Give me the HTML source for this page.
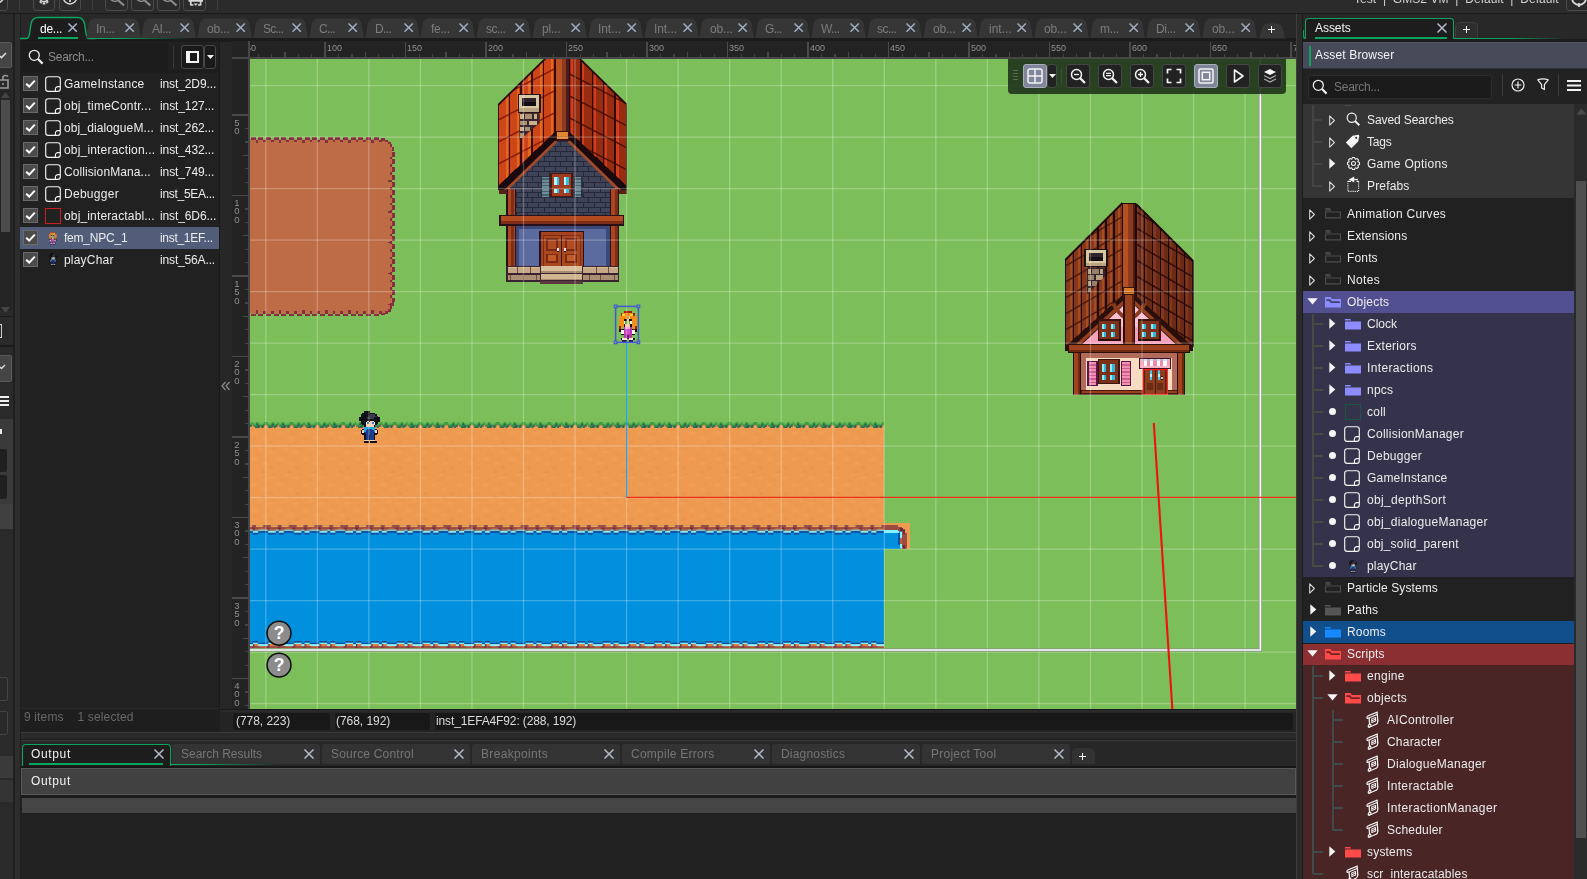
<!DOCTYPE html>
<html><head><meta charset="utf-8"><title>GameMaker</title><style>
*{box-sizing:border-box;margin:0;padding:0}
html,body{width:1587px;height:879px;overflow:hidden;background:#212121}
body{font-family:"Liberation Sans",sans-serif;font-size:13px;color:#ececec;position:relative}
.abs{position:absolute}
.t{position:absolute;white-space:nowrap;line-height:16px;height:16px;color:#ececec;will-change:transform}
svg{display:block;overflow:visible}
</style></head><body>
<div class="abs" style="left:0;top:14px;width:14px;height:865px;background:#2a2a2a"></div><div class="abs" style="left:14px;top:14px;width:7px;height:865px;background:#2d2d2d"></div><div class="abs" style="left:13px;top:14px;width:2px;height:865px;background:#1f1f1f"></div><div class="abs" style="left:20px;top:14px;width:1px;height:865px;background:#1f1f1f"></div><div class="abs" style="left:-6px;top:42px;width:18px;height:26px;background:#454545;border:1px solid #5a5a5a;border-radius:2px"></div><svg class="abs" style="left:0;top:48px" width="8" height="12" viewBox="0 0 8 12"><path d="M0 8l1.5 1.5L6 5" stroke="#ddd" stroke-width="1.6" fill="none"/></svg><svg class="abs" style="left:0;top:70px" width="12" height="20" viewBox="0 0 12 20" fill="none" stroke="#999" stroke-width="1.6"><path d="M-2 10h10v8h-10M3 10v-3.5a3.5 3.5 0 0 1 5 0"/><path d="M3 13v2" /></svg><div class="abs" style="left:0;top:90px;width:12px;height:220px;background:#252525"></div><div class="abs" style="left:1px;top:100px;width:9px;height:132px;background:#4c4c4c"></div><svg class="abs" style="left:0;top:90px" width="12" height="10"><path d="M1 8h9L5.5 2z" fill="#444"/></svg><svg class="abs" style="left:0;top:305px" width="12" height="10"><path d="M1 2h9L5.5 8z" fill="#444"/></svg><div class="abs" style="left:0;top:316px;width:13px;height:1px;background:#1c1c1c"></div><div class="abs" style="left:0px;top:324px;width:2px;height:14px;border:1px solid #ccc;border-left:none"></div><div class="abs" style="left:0;top:345px;width:13px;height:2px;background:#1c1c1c"></div><div class="abs" style="left:-6px;top:355px;width:18px;height:27px;background:#454545;border:1px solid #5a5a5a;border-radius:2px"></div><svg class="abs" style="left:0;top:362px" width="8" height="12" viewBox="0 0 8 12"><path d="M0 5l1.5 1.5L5 3" stroke="#ddd" stroke-width="1.4" fill="none"/></svg><div class="abs" style="left:0;top:396px;width:9px;height:2px;background:#eee;box-shadow:0 4px #eee,0 8px #eee"></div><div class="abs" style="left:0;top:419px;width:12.5px;height:85px;background:#3a3a3a"></div><div class="abs" style="left:0;top:429px;width:1.5px;height:5px;background:#eee"></div><div class="abs" style="left:-4px;top:448.5px;width:11px;height:23px;background:#202020;border-radius:2px"></div><div class="abs" style="left:-4px;top:475px;width:11px;height:24px;background:#202020;border-radius:2px"></div><div class="abs" style="left:0;top:504px;width:13px;height:24.5px;background:#404040"></div><div class="abs" style="left:-4px;top:677px;width:11.5px;height:24px;border:1px solid #444;border-radius:2px"></div><div class="abs" style="left:-4px;top:711px;width:11.5px;height:24px;border:1px solid #444;border-radius:2px"></div><div class="abs" style="left:0;top:756px;width:13px;height:22px;background:#3a3a3a"></div><div class="abs" style="left:0;top:780px;width:13px;height:22px;background:#343434"></div><div class="abs" style="left:21px;top:14px;width:1275px;height:26px;background:#282828"></div><div class="abs" style="left:21px;top:38px;width:1275px;height:4px;background:#1b1b1b"></div><svg class="abs" style="left:20.3px;top:16px" width="75.6" height="24" viewBox="-8 -2 75.6 24"><path d="M-8 20.5H-1.5C0.5 20.5 1 19 1.3 17L3 6C4 1.5 6 -0.5 10 -0.5H49.6C53.6 -0.5 55.6 1.5 56.6 6L58.300000000000004 17C58.6 19 59.1 20.5 61.1 20.5H67.6V22H-8Z" fill="#1d1d1d" stroke="none"/><path d="M-8 20.5H-1.5C0.5 20.5 1 19 1.3 17L3 6C4 1.5 6 -0.5 10 -0.5H49.6C53.6 -0.5 55.6 1.5 56.6 6L58.300000000000004 17C58.6 19 59.1 20.5 61.1 20.5H67.6" fill="none" stroke="#0aa561" stroke-width="1.4"/></svg><div class="t" style="left:40px;top:21px;color:#ffffff;font-size:12px;letter-spacing:-0.254px;">de...</div><svg class="abs" style="left:68.3px;top:23.4px" width="9.3" height="9.3" viewBox="0 0 9.3 9.3"><path d="M0.5 0.5L8.8 8.8M8.8 0.5L0.5 8.8" stroke="#a9b4c8" stroke-width="1.5" fill="none"/></svg><div class="abs" style="left:38px;top:36.6px;width:40px;height:2.2px;background:#0aa561"></div><svg class="abs" style="left:85.6px;top:18px" width="55.3" height="20" viewBox="0 0 55.3 20"><path d="M0 20C0.8 18 1.2 16 1.6 13L2.4 7.5C3.2 2.5 5.4 0.5 9.5 0.5H45.8C49.9 0.5 52.099999999999994 2.5 52.9 7.5L53.699999999999996 13C54.099999999999994 16 54.5 18 55.3 20Z" fill="#363636"/></svg><div class="t" style="left:95.8px;top:21px;color:#7c7c7c;font-size:12px;letter-spacing:-0.264px;">In...</div><svg class="abs" style="left:124.5px;top:23.4px" width="9.3" height="9.3" viewBox="0 0 9.3 9.3"><path d="M0.5 0.5L8.8 8.8M8.8 0.5L0.5 8.8" stroke="#a3aec2" stroke-width="1.5" fill="none"/></svg><svg class="abs" style="left:141.4px;top:18px" width="55.3" height="20" viewBox="0 0 55.3 20"><path d="M0 20C0.8 18 1.2 16 1.6 13L2.4 7.5C3.2 2.5 5.4 0.5 9.5 0.5H45.8C49.9 0.5 52.099999999999994 2.5 52.9 7.5L53.699999999999996 13C54.099999999999994 16 54.5 18 55.3 20Z" fill="#363636"/></svg><div class="t" style="left:151.6px;top:21px;color:#7c7c7c;font-size:12px;letter-spacing:-0.483px;">AI...</div><svg class="abs" style="left:180.3px;top:23.4px" width="9.3" height="9.3" viewBox="0 0 9.3 9.3"><path d="M0.5 0.5L8.8 8.8M8.8 0.5L0.5 8.8" stroke="#a3aec2" stroke-width="1.5" fill="none"/></svg><svg class="abs" style="left:197.20000000000002px;top:18px" width="55.3" height="20" viewBox="0 0 55.3 20"><path d="M0 20C0.8 18 1.2 16 1.6 13L2.4 7.5C3.2 2.5 5.4 0.5 9.5 0.5H45.8C49.9 0.5 52.099999999999994 2.5 52.9 7.5L53.699999999999996 13C54.099999999999994 16 54.5 18 55.3 20Z" fill="#363636"/></svg><div class="t" style="left:207.4px;top:21px;color:#7c7c7c;font-size:12px;letter-spacing:-0.151px;">ob...</div><svg class="abs" style="left:236.1px;top:23.4px" width="9.3" height="9.3" viewBox="0 0 9.3 9.3"><path d="M0.5 0.5L8.8 8.8M8.8 0.5L0.5 8.8" stroke="#a3aec2" stroke-width="1.5" fill="none"/></svg><svg class="abs" style="left:253.0px;top:18px" width="55.3" height="20" viewBox="0 0 55.3 20"><path d="M0 20C0.8 18 1.2 16 1.6 13L2.4 7.5C3.2 2.5 5.4 0.5 9.5 0.5H45.8C49.9 0.5 52.099999999999994 2.5 52.9 7.5L53.699999999999996 13C54.099999999999994 16 54.5 18 55.3 20Z" fill="#363636"/></svg><div class="t" style="left:263.2px;top:21px;color:#7c7c7c;font-size:12px;letter-spacing:-0.742px;">Sc...</div><svg class="abs" style="left:291.9px;top:23.4px" width="9.3" height="9.3" viewBox="0 0 9.3 9.3"><path d="M0.5 0.5L8.8 8.8M8.8 0.5L0.5 8.8" stroke="#a3aec2" stroke-width="1.5" fill="none"/></svg><svg class="abs" style="left:308.8px;top:18px" width="55.3" height="20" viewBox="0 0 55.3 20"><path d="M0 20C0.8 18 1.2 16 1.6 13L2.4 7.5C3.2 2.5 5.4 0.5 9.5 0.5H45.8C49.9 0.5 52.099999999999994 2.5 52.9 7.5L53.699999999999996 13C54.099999999999994 16 54.5 18 55.3 20Z" fill="#363636"/></svg><div class="t" style="left:319.0px;top:21px;color:#7c7c7c;font-size:12px;letter-spacing:-0.779px;">C...</div><svg class="abs" style="left:347.7px;top:23.4px" width="9.3" height="9.3" viewBox="0 0 9.3 9.3"><path d="M0.5 0.5L8.8 8.8M8.8 0.5L0.5 8.8" stroke="#a3aec2" stroke-width="1.5" fill="none"/></svg><svg class="abs" style="left:364.6px;top:18px" width="55.3" height="20" viewBox="0 0 55.3 20"><path d="M0 20C0.8 18 1.2 16 1.6 13L2.4 7.5C3.2 2.5 5.4 0.5 9.5 0.5H45.8C49.9 0.5 52.099999999999994 2.5 52.9 7.5L53.699999999999996 13C54.099999999999994 16 54.5 18 55.3 20Z" fill="#363636"/></svg><div class="t" style="left:374.8px;top:21px;color:#7c7c7c;font-size:12px;letter-spacing:-0.607px;">D...</div><svg class="abs" style="left:403.5px;top:23.4px" width="9.3" height="9.3" viewBox="0 0 9.3 9.3"><path d="M0.5 0.5L8.8 8.8M8.8 0.5L0.5 8.8" stroke="#a3aec2" stroke-width="1.5" fill="none"/></svg><svg class="abs" style="left:420.40000000000003px;top:18px" width="55.3" height="20" viewBox="0 0 55.3 20"><path d="M0 20C0.8 18 1.2 16 1.6 13L2.4 7.5C3.2 2.5 5.4 0.5 9.5 0.5H45.8C49.9 0.5 52.099999999999994 2.5 52.9 7.5L53.699999999999996 13C54.099999999999994 16 54.5 18 55.3 20Z" fill="#363636"/></svg><div class="t" style="left:430.6px;top:21px;color:#7c7c7c;font-size:12px;letter-spacing:-0.245px;">fe...</div><svg class="abs" style="left:459.3px;top:23.4px" width="9.3" height="9.3" viewBox="0 0 9.3 9.3"><path d="M0.5 0.5L8.8 8.8M8.8 0.5L0.5 8.8" stroke="#a3aec2" stroke-width="1.5" fill="none"/></svg><svg class="abs" style="left:476.2px;top:18px" width="55.3" height="20" viewBox="0 0 55.3 20"><path d="M0 20C0.8 18 1.2 16 1.6 13L2.4 7.5C3.2 2.5 5.4 0.5 9.5 0.5H45.8C49.9 0.5 52.099999999999994 2.5 52.9 7.5L53.699999999999996 13C54.099999999999994 16 54.5 18 55.3 20Z" fill="#363636"/></svg><div class="t" style="left:486.4px;top:21px;color:#7c7c7c;font-size:12px;letter-spacing:-0.517px;">sc...</div><svg class="abs" style="left:515.1px;top:23.4px" width="9.3" height="9.3" viewBox="0 0 9.3 9.3"><path d="M0.5 0.5L8.8 8.8M8.8 0.5L0.5 8.8" stroke="#a3aec2" stroke-width="1.5" fill="none"/></svg><svg class="abs" style="left:532.0px;top:18px" width="55.3" height="20" viewBox="0 0 55.3 20"><path d="M0 20C0.8 18 1.2 16 1.6 13L2.4 7.5C3.2 2.5 5.4 0.5 9.5 0.5H45.8C49.9 0.5 52.099999999999994 2.5 52.9 7.5L53.699999999999996 13C54.099999999999994 16 54.5 18 55.3 20Z" fill="#363636"/></svg><div class="t" style="left:542.2px;top:21px;color:#7c7c7c;font-size:12px;letter-spacing:-0.195px;">pl...</div><svg class="abs" style="left:570.9px;top:23.4px" width="9.3" height="9.3" viewBox="0 0 9.3 9.3"><path d="M0.5 0.5L8.8 8.8M8.8 0.5L0.5 8.8" stroke="#a3aec2" stroke-width="1.5" fill="none"/></svg><svg class="abs" style="left:587.8px;top:18px" width="55.3" height="20" viewBox="0 0 55.3 20"><path d="M0 20C0.8 18 1.2 16 1.6 13L2.4 7.5C3.2 2.5 5.4 0.5 9.5 0.5H45.8C49.9 0.5 52.099999999999994 2.5 52.9 7.5L53.699999999999996 13C54.099999999999994 16 54.5 18 55.3 20Z" fill="#363636"/></svg><div class="t" style="left:598.0px;top:21px;color:#7c7c7c;font-size:12px;letter-spacing:-0.069px;">Int...</div><svg class="abs" style="left:626.7px;top:23.4px" width="9.3" height="9.3" viewBox="0 0 9.3 9.3"><path d="M0.5 0.5L8.8 8.8M8.8 0.5L0.5 8.8" stroke="#a3aec2" stroke-width="1.5" fill="none"/></svg><svg class="abs" style="left:643.5999999999999px;top:18px" width="55.3" height="20" viewBox="0 0 55.3 20"><path d="M0 20C0.8 18 1.2 16 1.6 13L2.4 7.5C3.2 2.5 5.4 0.5 9.5 0.5H45.8C49.9 0.5 52.099999999999994 2.5 52.9 7.5L53.699999999999996 13C54.099999999999994 16 54.5 18 55.3 20Z" fill="#363636"/></svg><div class="t" style="left:653.8px;top:21px;color:#7c7c7c;font-size:12px;letter-spacing:-0.069px;">Int...</div><svg class="abs" style="left:682.5px;top:23.4px" width="9.3" height="9.3" viewBox="0 0 9.3 9.3"><path d="M0.5 0.5L8.8 8.8M8.8 0.5L0.5 8.8" stroke="#a3aec2" stroke-width="1.5" fill="none"/></svg><svg class="abs" style="left:699.4px;top:18px" width="55.3" height="20" viewBox="0 0 55.3 20"><path d="M0 20C0.8 18 1.2 16 1.6 13L2.4 7.5C3.2 2.5 5.4 0.5 9.5 0.5H45.8C49.9 0.5 52.099999999999994 2.5 52.9 7.5L53.699999999999996 13C54.099999999999994 16 54.5 18 55.3 20Z" fill="#363636"/></svg><div class="t" style="left:709.6px;top:21px;color:#7c7c7c;font-size:12px;letter-spacing:-0.151px;">ob...</div><svg class="abs" style="left:738.3px;top:23.4px" width="9.3" height="9.3" viewBox="0 0 9.3 9.3"><path d="M0.5 0.5L8.8 8.8M8.8 0.5L0.5 8.8" stroke="#a3aec2" stroke-width="1.5" fill="none"/></svg><svg class="abs" style="left:755.1999999999999px;top:18px" width="55.3" height="20" viewBox="0 0 55.3 20"><path d="M0 20C0.8 18 1.2 16 1.6 13L2.4 7.5C3.2 2.5 5.4 0.5 9.5 0.5H45.8C49.9 0.5 52.099999999999994 2.5 52.9 7.5L53.699999999999996 13C54.099999999999994 16 54.5 18 55.3 20Z" fill="#363636"/></svg><div class="t" style="left:765.4px;top:21px;color:#7c7c7c;font-size:12px;letter-spacing:-0.654px;">G...</div><svg class="abs" style="left:794.1px;top:23.4px" width="9.3" height="9.3" viewBox="0 0 9.3 9.3"><path d="M0.5 0.5L8.8 8.8M8.8 0.5L0.5 8.8" stroke="#a3aec2" stroke-width="1.5" fill="none"/></svg><svg class="abs" style="left:811.0px;top:18px" width="55.3" height="20" viewBox="0 0 55.3 20"><path d="M0 20C0.8 18 1.2 16 1.6 13L2.4 7.5C3.2 2.5 5.4 0.5 9.5 0.5H45.8C49.9 0.5 52.099999999999994 2.5 52.9 7.5L53.699999999999996 13C54.099999999999994 16 54.5 18 55.3 20Z" fill="#363636"/></svg><div class="t" style="left:821.2px;top:21px;color:#7c7c7c;font-size:12px;letter-spacing:-0.545px;">W...</div><svg class="abs" style="left:849.9px;top:23.4px" width="9.3" height="9.3" viewBox="0 0 9.3 9.3"><path d="M0.5 0.5L8.8 8.8M8.8 0.5L0.5 8.8" stroke="#a3aec2" stroke-width="1.5" fill="none"/></svg><svg class="abs" style="left:866.8px;top:18px" width="55.3" height="20" viewBox="0 0 55.3 20"><path d="M0 20C0.8 18 1.2 16 1.6 13L2.4 7.5C3.2 2.5 5.4 0.5 9.5 0.5H45.8C49.9 0.5 52.099999999999994 2.5 52.9 7.5L53.699999999999996 13C54.099999999999994 16 54.5 18 55.3 20Z" fill="#363636"/></svg><div class="t" style="left:877.0px;top:21px;color:#7c7c7c;font-size:12px;letter-spacing:-0.517px;">sc...</div><svg class="abs" style="left:905.7px;top:23.4px" width="9.3" height="9.3" viewBox="0 0 9.3 9.3"><path d="M0.5 0.5L8.8 8.8M8.8 0.5L0.5 8.8" stroke="#a3aec2" stroke-width="1.5" fill="none"/></svg><svg class="abs" style="left:922.5999999999999px;top:18px" width="55.3" height="20" viewBox="0 0 55.3 20"><path d="M0 20C0.8 18 1.2 16 1.6 13L2.4 7.5C3.2 2.5 5.4 0.5 9.5 0.5H45.8C49.9 0.5 52.099999999999994 2.5 52.9 7.5L53.699999999999996 13C54.099999999999994 16 54.5 18 55.3 20Z" fill="#363636"/></svg><div class="t" style="left:932.8px;top:21px;color:#7c7c7c;font-size:12px;letter-spacing:-0.151px;">ob...</div><svg class="abs" style="left:961.5px;top:23.4px" width="9.3" height="9.3" viewBox="0 0 9.3 9.3"><path d="M0.5 0.5L8.8 8.8M8.8 0.5L0.5 8.8" stroke="#a3aec2" stroke-width="1.5" fill="none"/></svg><svg class="abs" style="left:978.4px;top:18px" width="55.3" height="20" viewBox="0 0 55.3 20"><path d="M0 20C0.8 18 1.2 16 1.6 13L2.4 7.5C3.2 2.5 5.4 0.5 9.5 0.5H45.8C49.9 0.5 52.099999999999994 2.5 52.9 7.5L53.699999999999996 13C54.099999999999994 16 54.5 18 55.3 20Z" fill="#363636"/></svg><div class="t" style="left:988.6px;top:21px;color:#7c7c7c;font-size:12px;letter-spacing:-0.011px;">int...</div><svg class="abs" style="left:1017.3px;top:23.4px" width="9.3" height="9.3" viewBox="0 0 9.3 9.3"><path d="M0.5 0.5L8.8 8.8M8.8 0.5L0.5 8.8" stroke="#a3aec2" stroke-width="1.5" fill="none"/></svg><svg class="abs" style="left:1034.2px;top:18px" width="55.3" height="20" viewBox="0 0 55.3 20"><path d="M0 20C0.8 18 1.2 16 1.6 13L2.4 7.5C3.2 2.5 5.4 0.5 9.5 0.5H45.8C49.9 0.5 52.099999999999994 2.5 52.9 7.5L53.699999999999996 13C54.099999999999994 16 54.5 18 55.3 20Z" fill="#363636"/></svg><div class="t" style="left:1044.4px;top:21px;color:#7c7c7c;font-size:12px;letter-spacing:-0.151px;">ob...</div><svg class="abs" style="left:1073.1px;top:23.4px" width="9.3" height="9.3" viewBox="0 0 9.3 9.3"><path d="M0.5 0.5L8.8 8.8M8.8 0.5L0.5 8.8" stroke="#a3aec2" stroke-width="1.5" fill="none"/></svg><svg class="abs" style="left:1090.0px;top:18px" width="55.3" height="20" viewBox="0 0 55.3 20"><path d="M0 20C0.8 18 1.2 16 1.6 13L2.4 7.5C3.2 2.5 5.4 0.5 9.5 0.5H45.8C49.9 0.5 52.099999999999994 2.5 52.9 7.5L53.699999999999996 13C54.099999999999994 16 54.5 18 55.3 20Z" fill="#363636"/></svg><div class="t" style="left:1100.2px;top:21px;color:#7c7c7c;font-size:12px;letter-spacing:-0.216px;">m...</div><svg class="abs" style="left:1128.9px;top:23.4px" width="9.3" height="9.3" viewBox="0 0 9.3 9.3"><path d="M0.5 0.5L8.8 8.8M8.8 0.5L0.5 8.8" stroke="#a3aec2" stroke-width="1.5" fill="none"/></svg><svg class="abs" style="left:1145.8px;top:18px" width="55.3" height="20" viewBox="0 0 55.3 20"><path d="M0 20C0.8 18 1.2 16 1.6 13L2.4 7.5C3.2 2.5 5.4 0.5 9.5 0.5H45.8C49.9 0.5 52.099999999999994 2.5 52.9 7.5L53.699999999999996 13C54.099999999999994 16 54.5 18 55.3 20Z" fill="#363636"/></svg><div class="t" style="left:1156.0px;top:21px;color:#7c7c7c;font-size:12px;letter-spacing:-0.317px;">Di...</div><svg class="abs" style="left:1184.7px;top:23.4px" width="9.3" height="9.3" viewBox="0 0 9.3 9.3"><path d="M0.5 0.5L8.8 8.8M8.8 0.5L0.5 8.8" stroke="#a3aec2" stroke-width="1.5" fill="none"/></svg><svg class="abs" style="left:1201.6px;top:18px" width="55.3" height="20" viewBox="0 0 55.3 20"><path d="M0 20C0.8 18 1.2 16 1.6 13L2.4 7.5C3.2 2.5 5.4 0.5 9.5 0.5H45.8C49.9 0.5 52.099999999999994 2.5 52.9 7.5L53.699999999999996 13C54.099999999999994 16 54.5 18 55.3 20Z" fill="#363636"/></svg><div class="t" style="left:1211.8px;top:21px;color:#7c7c7c;font-size:12px;letter-spacing:-0.151px;">ob...</div><svg class="abs" style="left:1240.5px;top:23.4px" width="9.3" height="9.3" viewBox="0 0 9.3 9.3"><path d="M0.5 0.5L8.8 8.8M8.8 0.5L0.5 8.8" stroke="#a3aec2" stroke-width="1.5" fill="none"/></svg><div class="abs" style="left:87px;top:37.7px;width:105px;height:1.4px;background:linear-gradient(90deg,#0aa561 0,#0aa561 30%,rgba(10,165,97,0) 100%)"></div><svg class="abs" style="left:1259px;top:22.6px" width="26.4" height="15.399999999999999" viewBox="0 0 26.4 15.399999999999999"><path d="M0 15.399999999999999C0.8 13.399999999999999 1.2 11.399999999999999 1.6 8.399999999999999L2.4 7.5C3.2 2.5 5.4 0.5 9.5 0.5H16.9C21.0 0.5 23.2 2.5 24.0 7.5L24.799999999999997 8.399999999999999C25.2 11.399999999999999 25.599999999999998 13.399999999999999 26.4 15.399999999999999Z" fill="#363636"/></svg><svg class="abs" style="left:1267px;top:25px" width="9" height="9" shape-rendering="crispEdges"><path d="M4.5 1v7M1 4.5h7" stroke="#f0f0f0" stroke-width="1"/></svg><div class="abs" style="left:21px;top:42px;width:199px;height:667px;background:#212121"></div><div class="abs" style="left:21px;top:43px;width:147px;height:27px;background:#1c1c1c"></div><div class="abs" style="left:168px;top:43px;width:52px;height:27px;background:#202020"></div><svg class="abs" style="left:28px;top:49px" width="16" height="16" viewBox="0 0 16 16" fill="none" stroke="#ededed"><circle cx="6.3" cy="6.3" r="5" stroke-width="1.3"/><path d="M10 10L14.6 14.6" stroke-width="2.2"/></svg><div class="t" style="left:48px;top:49px;color:#8c8c8c;font-size:12px;letter-spacing:-0.254px;">Search...</div><div class="abs" style="left:173px;top:46px;width:1px;height:22px;background:#3a3a3a"></div><div class="abs" style="left:181px;top:45px;width:23px;height:24px;background:#1a1a1a;border:1px solid #474747;border-radius:3px"></div><div class="abs" style="left:204px;top:45px;width:12px;height:24px;background:#1a1a1a;border:1px solid #474747;border-radius:3px"></div><div class="abs" style="left:186px;top:51px;width:13px;height:12px;background:#f4f4f4"></div><div class="abs" style="left:190px;top:53px;width:7px;height:8px;background:#1a1a1a"></div><svg class="abs" style="left:207px;top:55px" width="7" height="4"><path d="M0 0h7L3.5 4z" fill="#f0f0f0"/></svg><div class="abs" style="left:21px;top:70px;width:199px;height:3px;background:#1d1d1d"></div><div class="abs" style="left:23px;top:76.3px;width:15px;height:15px;background:#4b4b4b;border:1px solid #6b6b6b"></div><svg class="abs" style="left:23px;top:76.3px" width="15" height="15" viewBox="0 0 15 15"><path d="M3.2 7.8L6.2 10.6L11.8 4.6" stroke="#fff" stroke-width="2" fill="none"/></svg><svg class="abs" style="left:45px;top:76px" width="16" height="16" viewBox="0 0 16 16" fill="none" stroke="#f4f4f4" stroke-width="1.15"><rect x="0.7" y="0.7" width="14.6" height="14.6" rx="2.6"/><path d="M10.4 15.2V13A2.4 2.4 0 0 1 12.8 10.6H15.2"/></svg><div class="t" style="left:64px;top:76px;color:#ececec;font-size:12px;letter-spacing:0.202px;">GameInstance</div><div class="t" style="left:160px;top:76px;color:#ececec;font-size:12px;letter-spacing:-0.109px;">inst_2D9...</div><div class="abs" style="left:23px;top:98.3px;width:15px;height:15px;background:#4b4b4b;border:1px solid #6b6b6b"></div><svg class="abs" style="left:23px;top:98.3px" width="15" height="15" viewBox="0 0 15 15"><path d="M3.2 7.8L6.2 10.6L11.8 4.6" stroke="#fff" stroke-width="2" fill="none"/></svg><svg class="abs" style="left:45px;top:98px" width="16" height="16" viewBox="0 0 16 16" fill="none" stroke="#f4f4f4" stroke-width="1.15"><rect x="0.7" y="0.7" width="14.6" height="14.6" rx="2.6"/><path d="M10.4 15.2V13A2.4 2.4 0 0 1 12.8 10.6H15.2"/></svg><div class="t" style="left:64px;top:98px;color:#ececec;font-size:12px;letter-spacing:0.214px;">obj_timeContr...</div><div class="t" style="left:160px;top:98px;color:#ececec;font-size:12px;letter-spacing:-0.099px;">inst_127...</div><div class="abs" style="left:23px;top:120.3px;width:15px;height:15px;background:#4b4b4b;border:1px solid #6b6b6b"></div><svg class="abs" style="left:23px;top:120.3px" width="15" height="15" viewBox="0 0 15 15"><path d="M3.2 7.8L6.2 10.6L11.8 4.6" stroke="#fff" stroke-width="2" fill="none"/></svg><svg class="abs" style="left:45px;top:120px" width="16" height="16" viewBox="0 0 16 16" fill="none" stroke="#f4f4f4" stroke-width="1.15"><rect x="0.7" y="0.7" width="14.6" height="14.6" rx="2.6"/><path d="M10.4 15.2V13A2.4 2.4 0 0 1 12.8 10.6H15.2"/></svg><div class="t" style="left:64px;top:120px;color:#ececec;font-size:12px;letter-spacing:0.111px;">obj_dialogueM...</div><div class="t" style="left:160px;top:120px;color:#ececec;font-size:12px;letter-spacing:-0.099px;">inst_262...</div><div class="abs" style="left:23px;top:142.3px;width:15px;height:15px;background:#4b4b4b;border:1px solid #6b6b6b"></div><svg class="abs" style="left:23px;top:142.3px" width="15" height="15" viewBox="0 0 15 15"><path d="M3.2 7.8L6.2 10.6L11.8 4.6" stroke="#fff" stroke-width="2" fill="none"/></svg><svg class="abs" style="left:45px;top:142px" width="16" height="16" viewBox="0 0 16 16" fill="none" stroke="#f4f4f4" stroke-width="1.15"><rect x="0.7" y="0.7" width="14.6" height="14.6" rx="2.6"/><path d="M10.4 15.2V13A2.4 2.4 0 0 1 12.8 10.6H15.2"/></svg><div class="t" style="left:64px;top:142px;color:#ececec;font-size:12px;letter-spacing:0.18px;">obj_interaction...</div><div class="t" style="left:160px;top:142px;color:#ececec;font-size:12px;letter-spacing:-0.099px;">inst_432...</div><div class="abs" style="left:23px;top:164.3px;width:15px;height:15px;background:#4b4b4b;border:1px solid #6b6b6b"></div><svg class="abs" style="left:23px;top:164.3px" width="15" height="15" viewBox="0 0 15 15"><path d="M3.2 7.8L6.2 10.6L11.8 4.6" stroke="#fff" stroke-width="2" fill="none"/></svg><svg class="abs" style="left:45px;top:164px" width="16" height="16" viewBox="0 0 16 16" fill="none" stroke="#f4f4f4" stroke-width="1.15"><rect x="0.7" y="0.7" width="14.6" height="14.6" rx="2.6"/><path d="M10.4 15.2V13A2.4 2.4 0 0 1 12.8 10.6H15.2"/></svg><div class="t" style="left:64px;top:164px;color:#ececec;font-size:12px;letter-spacing:0.088px;">CollisionMana...</div><div class="t" style="left:160px;top:164px;color:#ececec;font-size:12px;letter-spacing:-0.099px;">inst_749...</div><div class="abs" style="left:23px;top:186.3px;width:15px;height:15px;background:#4b4b4b;border:1px solid #6b6b6b"></div><svg class="abs" style="left:23px;top:186.3px" width="15" height="15" viewBox="0 0 15 15"><path d="M3.2 7.8L6.2 10.6L11.8 4.6" stroke="#fff" stroke-width="2" fill="none"/></svg><svg class="abs" style="left:45px;top:186px" width="16" height="16" viewBox="0 0 16 16" fill="none" stroke="#f4f4f4" stroke-width="1.15"><rect x="0.7" y="0.7" width="14.6" height="14.6" rx="2.6"/><path d="M10.4 15.2V13A2.4 2.4 0 0 1 12.8 10.6H15.2"/></svg><div class="t" style="left:64px;top:186px;color:#ececec;font-size:12px;letter-spacing:0.287px;">Debugger</div><div class="t" style="left:160px;top:186px;color:#ececec;font-size:12px;letter-spacing:-0.29px;">inst_5EA...</div><div class="abs" style="left:23px;top:208.3px;width:15px;height:15px;background:#4b4b4b;border:1px solid #6b6b6b"></div><svg class="abs" style="left:23px;top:208.3px" width="15" height="15" viewBox="0 0 15 15"><path d="M3.2 7.8L6.2 10.6L11.8 4.6" stroke="#fff" stroke-width="2" fill="none"/></svg><div class="abs" style="left:45px;top:208px;width:16px;height:16px;border:1.3px solid #c81e1e"></div><div class="t" style="left:64px;top:208px;color:#ececec;font-size:12px;letter-spacing:0.148px;">obj_interactabl...</div><div class="t" style="left:160px;top:208px;color:#ececec;font-size:12px;letter-spacing:-0.109px;">inst_6D6...</div><div class="abs" style="left:20px;top:227px;width:200px;height:22px;background:#525d7a"></div><div class="abs" style="left:23px;top:230.3px;width:15px;height:15px;background:#4b4b4b;border:1px solid #6b6b6b"></div><svg class="abs" style="left:23px;top:230.3px" width="15" height="15" viewBox="0 0 15 15"><path d="M3.2 7.8L6.2 10.6L11.8 4.6" stroke="#fff" stroke-width="2" fill="none"/></svg><svg class="abs" style="left:49.2px;top:232.4px" width="7.5" height="12.9" viewBox="0 0 11 19"><rect x="3" y="0" width="5" height="1.08" fill="#a81c10"/><rect x="1" y="1" width="1" height="1.08" fill="#a81c10"/><rect x="2" y="1" width="7" height="1.08" fill="#f48c18"/><rect x="9" y="1" width="1" height="1.08" fill="#a81c10"/><rect x="1" y="2" width="1" height="1.08" fill="#a81c10"/><rect x="2" y="2" width="2" height="1.08" fill="#ffd828"/><rect x="4" y="2" width="3" height="1.08" fill="#f48c18"/><rect x="7" y="2" width="2" height="1.08" fill="#ffd828"/><rect x="9" y="2" width="1" height="1.08" fill="#a81c10"/><rect x="0" y="3" width="6" height="1.08" fill="#f48c18"/><rect x="6" y="3" width="1" height="1.08" fill="#fff6ee"/><rect x="7" y="3" width="4" height="1.08" fill="#f48c18"/><rect x="0" y="4" width="6" height="1.08" fill="#f48c18"/><rect x="6" y="4" width="1" height="1.08" fill="#fff6ee"/><rect x="7" y="4" width="4" height="1.08" fill="#f48c18"/><rect x="0" y="5" width="3" height="1.08" fill="#f48c18"/><rect x="3" y="5" width="2" height="1.08" fill="#140c10"/><rect x="5" y="5" width="1" height="1.08" fill="#f8c8a0"/><rect x="6" y="5" width="2" height="1.08" fill="#140c10"/><rect x="8" y="5" width="3" height="1.08" fill="#f48c18"/><rect x="0" y="6" width="3" height="1.08" fill="#f48c18"/><rect x="3" y="6" width="1" height="1.08" fill="#fff6ee"/><rect x="4" y="6" width="1" height="1.08" fill="#30b030"/><rect x="5" y="6" width="1" height="1.08" fill="#f8c8a0"/><rect x="6" y="6" width="1" height="1.08" fill="#30b030"/><rect x="7" y="6" width="1" height="1.08" fill="#fff6ee"/><rect x="8" y="6" width="3" height="1.08" fill="#f48c18"/><rect x="0" y="7" width="3" height="1.08" fill="#f48c18"/><rect x="3" y="7" width="1" height="1.08" fill="#fff6ee"/><rect x="4" y="7" width="1" height="1.08" fill="#30b030"/><rect x="5" y="7" width="1" height="1.08" fill="#f8c8a0"/><rect x="6" y="7" width="1" height="1.08" fill="#30b030"/><rect x="7" y="7" width="1" height="1.08" fill="#fff6ee"/><rect x="8" y="7" width="3" height="1.08" fill="#f48c18"/><rect x="0" y="8" width="3" height="1.08" fill="#f48c18"/><rect x="3" y="8" width="1" height="1.08" fill="#140c10"/><rect x="4" y="8" width="3" height="1.08" fill="#f8c8a0"/><rect x="7" y="8" width="1" height="1.08" fill="#140c10"/><rect x="8" y="8" width="3" height="1.08" fill="#f48c18"/><rect x="0" y="9" width="1" height="1.08" fill="#a81c10"/><rect x="1" y="9" width="2" height="1.08" fill="#f48c18"/><rect x="3" y="9" width="1" height="1.08" fill="#140c10"/><rect x="4" y="9" width="3" height="1.08" fill="#f8c8a0"/><rect x="7" y="9" width="1" height="1.08" fill="#140c10"/><rect x="8" y="9" width="2" height="1.08" fill="#f48c18"/><rect x="10" y="9" width="1" height="1.08" fill="#a81c10"/><rect x="0" y="10" width="1" height="1.08" fill="#a81c10"/><rect x="1" y="10" width="1" height="1.08" fill="#f48c18"/><rect x="3" y="10" width="1" height="1.08" fill="#b838b4"/><rect x="4" y="10" width="3" height="1.08" fill="#f8a8e0"/><rect x="7" y="10" width="1" height="1.08" fill="#b838b4"/><rect x="9" y="10" width="1" height="1.08" fill="#f48c18"/><rect x="10" y="10" width="1" height="1.08" fill="#a81c10"/><rect x="0" y="11" width="1" height="1.08" fill="#140c10"/><rect x="1" y="11" width="1" height="1.08" fill="#a81c10"/><rect x="2" y="11" width="1" height="1.08" fill="#140c10"/><rect x="3" y="11" width="1" height="1.08" fill="#b838b4"/><rect x="4" y="11" width="3" height="1.08" fill="#cc4cc8"/><rect x="7" y="11" width="1" height="1.08" fill="#b838b4"/><rect x="8" y="11" width="1" height="1.08" fill="#140c10"/><rect x="9" y="11" width="1" height="1.08" fill="#a81c10"/><rect x="10" y="11" width="1" height="1.08" fill="#140c10"/><rect x="0" y="12" width="1" height="1.08" fill="#140c10"/><rect x="1" y="12" width="2" height="1.08" fill="#fff6ee"/><rect x="3" y="12" width="1" height="1.08" fill="#b838b4"/><rect x="4" y="12" width="3" height="1.08" fill="#cc4cc8"/><rect x="7" y="12" width="1" height="1.08" fill="#b838b4"/><rect x="8" y="12" width="2" height="1.08" fill="#fff6ee"/><rect x="10" y="12" width="1" height="1.08" fill="#140c10"/><rect x="1" y="13" width="2" height="1.08" fill="#fff6ee"/><rect x="3" y="13" width="1" height="1.08" fill="#b838b4"/><rect x="4" y="13" width="3" height="1.08" fill="#cc4cc8"/><rect x="7" y="13" width="1" height="1.08" fill="#b838b4"/><rect x="8" y="13" width="2" height="1.08" fill="#fff6ee"/><rect x="1" y="14" width="2" height="1.08" fill="#140c10"/><rect x="3" y="14" width="5" height="1.08" fill="#b838b4"/><rect x="8" y="14" width="2" height="1.08" fill="#140c10"/><rect x="3" y="15" width="2" height="1.08" fill="#b838b4"/><rect x="5" y="15" width="1" height="1.08" fill="#6a1a6a"/><rect x="6" y="15" width="2" height="1.08" fill="#b838b4"/><rect x="3" y="16" width="2" height="1.08" fill="#b838b4"/><rect x="5" y="16" width="1" height="1.08" fill="#6a1a6a"/><rect x="6" y="16" width="2" height="1.08" fill="#b838b4"/><rect x="1" y="17" width="1" height="1.08" fill="#140c10"/><rect x="2" y="17" width="3" height="1.08" fill="#ffe8d0"/><rect x="6" y="17" width="3" height="1.08" fill="#ffe8d0"/><rect x="9" y="17" width="1" height="1.08" fill="#140c10"/><rect x="2" y="18" width="3" height="1.08" fill="#201860"/><rect x="6" y="18" width="3" height="1.08" fill="#201860"/></svg><div class="t" style="left:64px;top:230px;color:#ececec;font-size:12px;letter-spacing:-0.217px;">fem_NPC_1</div><div class="t" style="left:160px;top:230px;color:#ececec;font-size:12px;letter-spacing:-0.302px;">inst_1EF...</div><div class="abs" style="left:23px;top:252.3px;width:15px;height:15px;background:#4b4b4b;border:1px solid #6b6b6b"></div><svg class="abs" style="left:23px;top:252.3px" width="15" height="15" viewBox="0 0 15 15"><path d="M3.2 7.8L6.2 10.6L11.8 4.6" stroke="#fff" stroke-width="2" fill="none"/></svg><svg class="abs" style="left:48.8px;top:253.4px" width="8.2" height="12.6" viewBox="0 0 13 20"><rect x="3" y="0" width="4" height="1.08" fill="#101018"/><rect x="2" y="1" width="8" height="1.08" fill="#101018"/><rect x="1" y="2" width="6" height="1.08" fill="#101018"/><rect x="7" y="2" width="3" height="1.08" fill="#3c3c4c"/><rect x="10" y="2" width="1" height="1.08" fill="#101018"/><rect x="1" y="3" width="5" height="1.08" fill="#101018"/><rect x="6" y="3" width="5" height="1.08" fill="#3c3c4c"/><rect x="11" y="3" width="1" height="1.08" fill="#101018"/><rect x="0" y="4" width="5" height="1.08" fill="#101018"/><rect x="5" y="4" width="4" height="1.08" fill="#3c3c4c"/><rect x="9" y="4" width="4" height="1.08" fill="#101018"/><rect x="0" y="5" width="13" height="1.08" fill="#101018"/><rect x="1" y="6" width="4" height="1.08" fill="#101018"/><rect x="5" y="6" width="1" height="1.08" fill="#f4d0b0"/><rect x="6" y="6" width="1" height="1.08" fill="#101018"/><rect x="7" y="6" width="2" height="1.08" fill="#f4d0b0"/><rect x="9" y="6" width="4" height="1.08" fill="#101018"/><rect x="1" y="7" width="3" height="1.08" fill="#101018"/><rect x="4" y="7" width="1" height="1.08" fill="#ffffff"/><rect x="5" y="7" width="1" height="1.08" fill="#3878c8"/><rect x="6" y="7" width="2" height="1.08" fill="#f4d0b0"/><rect x="8" y="7" width="1" height="1.08" fill="#3878c8"/><rect x="9" y="7" width="1" height="1.08" fill="#ffffff"/><rect x="10" y="7" width="2" height="1.08" fill="#101018"/><rect x="2" y="8" width="2" height="1.08" fill="#101018"/><rect x="4" y="8" width="6" height="1.08" fill="#f4d0b0"/><rect x="10" y="8" width="1" height="1.08" fill="#101018"/><rect x="3" y="9" width="1" height="1.08" fill="#101018"/><rect x="4" y="9" width="5" height="1.08" fill="#f4d0b0"/><rect x="9" y="9" width="1" height="1.08" fill="#101018"/><rect x="3" y="10" width="7" height="1.08" fill="#20a8e0"/><rect x="2" y="11" width="1" height="1.08" fill="#101018"/><rect x="3" y="11" width="2" height="1.08" fill="#20a8e0"/><rect x="5" y="11" width="3" height="1.08" fill="#1c3c90"/><rect x="8" y="11" width="2" height="1.08" fill="#20a8e0"/><rect x="10" y="11" width="1" height="1.08" fill="#101018"/><rect x="1" y="12" width="1" height="1.08" fill="#101018"/><rect x="2" y="12" width="1" height="1.08" fill="#f4d0b0"/><rect x="3" y="12" width="1" height="1.08" fill="#20a8e0"/><rect x="4" y="12" width="5" height="1.08" fill="#1c3c90"/><rect x="9" y="12" width="1" height="1.08" fill="#20a8e0"/><rect x="10" y="12" width="1" height="1.08" fill="#f4d0b0"/><rect x="11" y="12" width="1" height="1.08" fill="#101018"/><rect x="1" y="13" width="1" height="1.08" fill="#101018"/><rect x="2" y="13" width="1" height="1.08" fill="#f4d0b0"/><rect x="3" y="13" width="7" height="1.08" fill="#1c3c90"/><rect x="10" y="13" width="1" height="1.08" fill="#f4d0b0"/><rect x="11" y="13" width="1" height="1.08" fill="#101018"/><rect x="2" y="14" width="2" height="1.08" fill="#101018"/><rect x="4" y="14" width="5" height="1.08" fill="#1c3c90"/><rect x="9" y="14" width="2" height="1.08" fill="#101018"/><rect x="3" y="15" width="1" height="1.08" fill="#101018"/><rect x="4" y="15" width="2" height="1.08" fill="#1c3c90"/><rect x="6" y="15" width="1" height="1.08" fill="#101018"/><rect x="7" y="15" width="2" height="1.08" fill="#1c3c90"/><rect x="9" y="15" width="1" height="1.08" fill="#101018"/><rect x="3" y="16" width="1" height="1.08" fill="#101018"/><rect x="4" y="16" width="2" height="1.08" fill="#1c3c90"/><rect x="6" y="16" width="1" height="1.08" fill="#101018"/><rect x="7" y="16" width="2" height="1.08" fill="#1c3c90"/><rect x="9" y="16" width="1" height="1.08" fill="#101018"/><rect x="3" y="17" width="1" height="1.08" fill="#101018"/><rect x="4" y="17" width="2" height="1.08" fill="#1c3c90"/><rect x="6" y="17" width="1" height="1.08" fill="#101018"/><rect x="7" y="17" width="2" height="1.08" fill="#1c3c90"/><rect x="9" y="17" width="1" height="1.08" fill="#101018"/><rect x="3" y="18" width="3" height="1.08" fill="#f4d0b0"/><rect x="7" y="18" width="3" height="1.08" fill="#f4d0b0"/><rect x="3" y="19" width="3" height="1.08" fill="#101018"/><rect x="7" y="19" width="4" height="1.08" fill="#101018"/></svg><div class="t" style="left:64px;top:252px;color:#ececec;font-size:12px;letter-spacing:0.199px;">playChar</div><div class="t" style="left:160px;top:252px;color:#ececec;font-size:12px;letter-spacing:-0.153px;">inst_56A...</div><div class="abs" style="left:21px;top:708px;width:199px;height:24px;background:#1e1e1e;border-top:1px solid #2b2b2b"></div><div class="t" style="left:24px;top:709px;color:#686868;font-size:12px;letter-spacing:0.14px;">9 items&nbsp;&nbsp;&nbsp;&nbsp;1 selected</div><div class="abs" style="left:220px;top:42px;width:12px;height:667px;background:#272727"></div><div class="abs" style="left:219px;top:42px;width:1px;height:667px;background:#1a1a1a"></div><svg class="abs" style="left:221px;top:381px" width="10" height="10" viewBox="0 0 10 10" fill="none" stroke="#8a8a8a" stroke-width="1.2"><path d="M4.5 1L1 5l3.5 4M8.5 1L5 5l3.5 4"/></svg><div class="abs" style="left:232px;top:41px;width:1064px;height:18px;background:#232323"></div><div class="abs" style="left:232px;top:41px;width:18px;height:668px;background:#232323"></div><svg class="abs" style="left:232px;top:41px" width="1064" height="668" viewBox="232 41 1064 668" shape-rendering="crispEdges"><rect x="232.0" y="56.8" width="1064.0" height="2.0" fill="#464646" /><rect x="248.2" y="41.0" width="1.8" height="668.0" fill="#464646" /><rect x="257.5" y="54.0" width="1.2" height="3.0" fill="#444" /><rect x="270.9" y="54.0" width="1.2" height="3.0" fill="#444" /><rect x="284.3" y="52.0" width="1.2" height="5.0" fill="#484848" /><rect x="297.7" y="54.0" width="1.2" height="3.0" fill="#444" /><rect x="311.1" y="54.0" width="1.2" height="3.0" fill="#444" /><rect x="324.4" y="42.0" width="1.5" height="15.0" fill="#4a4a4a" /><rect x="338.0" y="54.0" width="1.2" height="3.0" fill="#444" /><rect x="351.4" y="54.0" width="1.2" height="3.0" fill="#444" /><rect x="364.8" y="52.0" width="1.2" height="5.0" fill="#484848" /><rect x="378.2" y="54.0" width="1.2" height="3.0" fill="#444" /><rect x="391.6" y="54.0" width="1.2" height="3.0" fill="#444" /><rect x="404.9" y="42.0" width="1.5" height="15.0" fill="#4a4a4a" /><rect x="418.5" y="54.0" width="1.2" height="3.0" fill="#444" /><rect x="431.9" y="54.0" width="1.2" height="3.0" fill="#444" /><rect x="445.3" y="52.0" width="1.2" height="5.0" fill="#484848" /><rect x="458.7" y="54.0" width="1.2" height="3.0" fill="#444" /><rect x="472.1" y="54.0" width="1.2" height="3.0" fill="#444" /><rect x="485.4" y="42.0" width="1.5" height="15.0" fill="#4a4a4a" /><rect x="499.0" y="54.0" width="1.2" height="3.0" fill="#444" /><rect x="512.4" y="54.0" width="1.2" height="3.0" fill="#444" /><rect x="525.8" y="52.0" width="1.2" height="5.0" fill="#484848" /><rect x="539.2" y="54.0" width="1.2" height="3.0" fill="#444" /><rect x="552.6" y="54.0" width="1.2" height="3.0" fill="#444" /><rect x="565.8" y="42.0" width="1.5" height="15.0" fill="#4a4a4a" /><rect x="579.5" y="54.0" width="1.2" height="3.0" fill="#444" /><rect x="592.9" y="54.0" width="1.2" height="3.0" fill="#444" /><rect x="606.3" y="52.0" width="1.2" height="5.0" fill="#484848" /><rect x="619.7" y="54.0" width="1.2" height="3.0" fill="#444" /><rect x="633.1" y="54.0" width="1.2" height="3.0" fill="#444" /><rect x="646.3" y="42.0" width="1.5" height="15.0" fill="#4a4a4a" /><rect x="660.0" y="54.0" width="1.2" height="3.0" fill="#444" /><rect x="673.4" y="54.0" width="1.2" height="3.0" fill="#444" /><rect x="686.8" y="52.0" width="1.2" height="5.0" fill="#484848" /><rect x="700.2" y="54.0" width="1.2" height="3.0" fill="#444" /><rect x="713.6" y="54.0" width="1.2" height="3.0" fill="#444" /><rect x="726.8" y="42.0" width="1.5" height="15.0" fill="#4a4a4a" /><rect x="740.5" y="54.0" width="1.2" height="3.0" fill="#444" /><rect x="753.9" y="54.0" width="1.2" height="3.0" fill="#444" /><rect x="767.3" y="52.0" width="1.2" height="5.0" fill="#484848" /><rect x="780.7" y="54.0" width="1.2" height="3.0" fill="#444" /><rect x="794.1" y="54.0" width="1.2" height="3.0" fill="#444" /><rect x="807.3" y="42.0" width="1.5" height="15.0" fill="#4a4a4a" /><rect x="821.0" y="54.0" width="1.2" height="3.0" fill="#444" /><rect x="834.4" y="54.0" width="1.2" height="3.0" fill="#444" /><rect x="847.8" y="52.0" width="1.2" height="5.0" fill="#484848" /><rect x="861.2" y="54.0" width="1.2" height="3.0" fill="#444" /><rect x="874.6" y="54.0" width="1.2" height="3.0" fill="#444" /><rect x="887.8" y="42.0" width="1.5" height="15.0" fill="#4a4a4a" /><rect x="901.5" y="54.0" width="1.2" height="3.0" fill="#444" /><rect x="914.9" y="54.0" width="1.2" height="3.0" fill="#444" /><rect x="928.3" y="52.0" width="1.2" height="5.0" fill="#484848" /><rect x="941.7" y="54.0" width="1.2" height="3.0" fill="#444" /><rect x="955.1" y="54.0" width="1.2" height="3.0" fill="#444" /><rect x="968.3" y="42.0" width="1.5" height="15.0" fill="#4a4a4a" /><rect x="982.0" y="54.0" width="1.2" height="3.0" fill="#444" /><rect x="995.4" y="54.0" width="1.2" height="3.0" fill="#444" /><rect x="1008.8" y="52.0" width="1.2" height="5.0" fill="#484848" /><rect x="1022.2" y="54.0" width="1.2" height="3.0" fill="#444" /><rect x="1035.6" y="54.0" width="1.2" height="3.0" fill="#444" /><rect x="1048.8" y="42.0" width="1.5" height="15.0" fill="#4a4a4a" /><rect x="1062.5" y="54.0" width="1.2" height="3.0" fill="#444" /><rect x="1075.9" y="54.0" width="1.2" height="3.0" fill="#444" /><rect x="1089.3" y="52.0" width="1.2" height="5.0" fill="#484848" /><rect x="1102.7" y="54.0" width="1.2" height="3.0" fill="#444" /><rect x="1116.1" y="54.0" width="1.2" height="3.0" fill="#444" /><rect x="1129.3" y="42.0" width="1.5" height="15.0" fill="#4a4a4a" /><rect x="1143.0" y="54.0" width="1.2" height="3.0" fill="#444" /><rect x="1156.4" y="54.0" width="1.2" height="3.0" fill="#444" /><rect x="1169.8" y="52.0" width="1.2" height="5.0" fill="#484848" /><rect x="1183.2" y="54.0" width="1.2" height="3.0" fill="#444" /><rect x="1196.6" y="54.0" width="1.2" height="3.0" fill="#444" /><rect x="1209.8" y="42.0" width="1.5" height="15.0" fill="#4a4a4a" /><rect x="1223.5" y="54.0" width="1.2" height="3.0" fill="#444" /><rect x="1236.9" y="54.0" width="1.2" height="3.0" fill="#444" /><rect x="1250.3" y="52.0" width="1.2" height="5.0" fill="#484848" /><rect x="1263.7" y="54.0" width="1.2" height="3.0" fill="#444" /><rect x="1277.1" y="54.0" width="1.2" height="3.0" fill="#444" /><rect x="1290.3" y="42.0" width="1.5" height="15.0" fill="#4a4a4a" /><rect x="232.0" y="114.3" width="16.0" height="1.5" fill="#4a4a4a" /><rect x="245.0" y="127.9" width="3.2" height="1.2" fill="#444" /><rect x="245.0" y="141.3" width="3.2" height="1.2" fill="#444" /><rect x="243.0" y="154.8" width="5.2" height="1.2" fill="#484848" /><rect x="245.0" y="168.2" width="3.2" height="1.2" fill="#444" /><rect x="245.0" y="181.6" width="3.2" height="1.2" fill="#444" /><rect x="232.0" y="194.8" width="16.0" height="1.5" fill="#4a4a4a" /><rect x="245.0" y="208.4" width="3.2" height="1.2" fill="#444" /><rect x="245.0" y="221.8" width="3.2" height="1.2" fill="#444" /><rect x="243.0" y="235.2" width="5.2" height="1.2" fill="#484848" /><rect x="245.0" y="248.7" width="3.2" height="1.2" fill="#444" /><rect x="245.0" y="262.1" width="3.2" height="1.2" fill="#444" /><rect x="232.0" y="275.3" width="16.0" height="1.5" fill="#4a4a4a" /><rect x="245.0" y="288.9" width="3.2" height="1.2" fill="#444" /><rect x="245.0" y="302.3" width="3.2" height="1.2" fill="#444" /><rect x="243.0" y="315.8" width="5.2" height="1.2" fill="#484848" /><rect x="245.0" y="329.2" width="3.2" height="1.2" fill="#444" /><rect x="245.0" y="342.6" width="3.2" height="1.2" fill="#444" /><rect x="232.0" y="355.8" width="16.0" height="1.5" fill="#4a4a4a" /><rect x="245.0" y="369.4" width="3.2" height="1.2" fill="#444" /><rect x="245.0" y="382.8" width="3.2" height="1.2" fill="#444" /><rect x="243.0" y="396.2" width="5.2" height="1.2" fill="#484848" /><rect x="245.0" y="409.7" width="3.2" height="1.2" fill="#444" /><rect x="245.0" y="423.1" width="3.2" height="1.2" fill="#444" /><rect x="232.0" y="436.3" width="16.0" height="1.5" fill="#4a4a4a" /><rect x="245.0" y="449.9" width="3.2" height="1.2" fill="#444" /><rect x="245.0" y="463.3" width="3.2" height="1.2" fill="#444" /><rect x="243.0" y="476.8" width="5.2" height="1.2" fill="#484848" /><rect x="245.0" y="490.2" width="3.2" height="1.2" fill="#444" /><rect x="245.0" y="503.6" width="3.2" height="1.2" fill="#444" /><rect x="232.0" y="516.8" width="16.0" height="1.5" fill="#4a4a4a" /><rect x="245.0" y="530.4" width="3.2" height="1.2" fill="#444" /><rect x="245.0" y="543.8" width="3.2" height="1.2" fill="#444" /><rect x="243.0" y="557.2" width="5.2" height="1.2" fill="#484848" /><rect x="245.0" y="570.7" width="3.2" height="1.2" fill="#444" /><rect x="245.0" y="584.1" width="3.2" height="1.2" fill="#444" /><rect x="232.0" y="597.3" width="16.0" height="1.5" fill="#4a4a4a" /><rect x="245.0" y="610.9" width="3.2" height="1.2" fill="#444" /><rect x="245.0" y="624.3" width="3.2" height="1.2" fill="#444" /><rect x="243.0" y="637.8" width="5.2" height="1.2" fill="#484848" /><rect x="245.0" y="651.2" width="3.2" height="1.2" fill="#444" /><rect x="245.0" y="664.6" width="3.2" height="1.2" fill="#444" /><rect x="232.0" y="677.8" width="16.0" height="1.5" fill="#4a4a4a" /><rect x="245.0" y="691.4" width="3.2" height="1.2" fill="#444" /><rect x="245.0" y="704.8" width="3.2" height="1.2" fill="#444" /></svg><div class="abs" style="left:250px;top:41px;width:1046px;height:16px;overflow:hidden"><div class="t" style="left:-3.7px;top:0px;font-size:9px;color:#909090;line-height:15px">50</div><div class="t" style="left:76.8px;top:0px;font-size:9px;color:#909090;line-height:15px">100</div><div class="t" style="left:157.3px;top:0px;font-size:9px;color:#909090;line-height:15px">150</div><div class="t" style="left:237.8px;top:0px;font-size:9px;color:#909090;line-height:15px">200</div><div class="t" style="left:318.3px;top:0px;font-size:9px;color:#909090;line-height:15px">250</div><div class="t" style="left:398.8px;top:0px;font-size:9px;color:#909090;line-height:15px">300</div><div class="t" style="left:479.3px;top:0px;font-size:9px;color:#909090;line-height:15px">350</div><div class="t" style="left:559.8px;top:0px;font-size:9px;color:#909090;line-height:15px">400</div><div class="t" style="left:640.3px;top:0px;font-size:9px;color:#909090;line-height:15px">450</div><div class="t" style="left:720.8px;top:0px;font-size:9px;color:#909090;line-height:15px">500</div><div class="t" style="left:801.3px;top:0px;font-size:9px;color:#909090;line-height:15px">550</div><div class="t" style="left:881.8px;top:0px;font-size:9px;color:#909090;line-height:15px">600</div><div class="t" style="left:962.3px;top:0px;font-size:9px;color:#909090;line-height:15px">650</div><div class="t" style="left:1042.8px;top:0px;font-size:9px;color:#909090;line-height:15px">700</div></div><div class="abs" style="left:232px;top:58px;width:16px;height:651px;overflow:hidden"><div class="abs" style="left:1px;top:60.6px;font-size:9.5px;color:#909090;line-height:8.4px;width:8px;text-align:center;will-change:transform">5<br>0</div><div class="abs" style="left:1px;top:141.1px;font-size:9.5px;color:#909090;line-height:8.4px;width:8px;text-align:center;will-change:transform">1<br>0<br>0</div><div class="abs" style="left:1px;top:221.6px;font-size:9.5px;color:#909090;line-height:8.4px;width:8px;text-align:center;will-change:transform">1<br>5<br>0</div><div class="abs" style="left:1px;top:302.1px;font-size:9.5px;color:#909090;line-height:8.4px;width:8px;text-align:center;will-change:transform">2<br>0<br>0</div><div class="abs" style="left:1px;top:382.6px;font-size:9.5px;color:#909090;line-height:8.4px;width:8px;text-align:center;will-change:transform">2<br>5<br>0</div><div class="abs" style="left:1px;top:463.1px;font-size:9.5px;color:#909090;line-height:8.4px;width:8px;text-align:center;will-change:transform">3<br>0<br>0</div><div class="abs" style="left:1px;top:543.6px;font-size:9.5px;color:#909090;line-height:8.4px;width:8px;text-align:center;will-change:transform">3<br>5<br>0</div><div class="abs" style="left:1px;top:624.1px;font-size:9.5px;color:#909090;line-height:8.4px;width:8px;text-align:center;will-change:transform">4<br>0<br>0</div></div><div class="abs" style="left:250px;top:59px;width:1046px;height:650px;background:#7cbf5a;overflow:hidden"><svg class="abs" style="left:0;top:0" width="1046" height="650" viewBox="250 59 1046 650"><defs><pattern id="psand" x="250" y="424.5" width="25.76" height="25.76" patternUnits="userSpaceOnUse"><rect width="25.76" height="25.76" fill="#ee9b51"/><g fill="#e28c48" fill-opacity=".55"><rect x="5.4" y="3.4" width="1.6" height="1.4"/><rect x="8.6" y="3.4" width="1.6" height="1.4"/><rect x="15.8" y="8" width="3.2" height="1.3"/><rect x="3" y="13.2" width="2.6" height="1.3"/><rect x="20.2" y="15.6" width="1.8" height="1.5"/><rect x="18.8" y="17.1" width="4.8" height="1.5"/><rect x="12.8" y="19.6" width="1.6" height="1.4"/><rect x="11.4" y="21" width="4.6" height="1.5"/><rect x="22.4" y="23.6" width="3" height="1.3"/></g><g fill="#f2a65c" fill-opacity=".5"><rect x="1" y="7.6" width="6" height="2.4"/><rect x="12" y="12.4" width="5" height="2"/><rect x="8" y="24" width="5" height="1.6"/><rect x="17" y="1" width="6" height="2"/></g></pattern><pattern id="pgrass" x="250" y="421.8" width="25.76" height="11" patternUnits="userSpaceOnUse"><rect y="6" width="25.76" height="5" fill="#ee9b51"/><rect y="3.3" width="25.76" height="3.1" fill="#ee9b51"/><rect x="1.8" y="0" width="1.4" height="1.7" fill="#2f9a40"/><rect x="6.1" y="0" width="2" height="1.7" fill="#2f9a40"/><rect x="14.1" y="0" width="3.5" height="1.7" fill="#2f9a40"/><rect x="22.2" y="0" width="1.8" height="1.7" fill="#2f9a40"/><rect x="0" y="1.6" width="25.76" height="1.8" fill="#2f9a40"/><rect x="3.4" y="1.6" width="2.4" height="1" fill="#7cbf5a"/><rect x="9" y="1.6" width="4" height="1" fill="#7cbf5a"/><rect x="18.4" y="1.6" width="3" height="1" fill="#7cbf5a"/><rect x="24.4" y="1.6" width="1.4" height="1" fill="#7cbf5a"/><rect x="6.2" y="1.6" width="1.8" height="1.8" fill="#1d5e56"/><rect x="22.2" y="1.6" width="1.8" height="1.8" fill="#1d5e56"/><rect x="0" y="3.3" width="25.76" height="1.7" fill="#1d5e56"/><rect x="4" y="3.3" width="3.4" height="1.7" fill="#2f9a40"/><rect x="10" y="3.3" width="2" height="1.7" fill="#2f9a40"/><rect x="18" y="3.3" width="3.6" height="1.7" fill="#2f9a40"/><rect x="23.4" y="3.3" width="2" height="1.7" fill="#2f9a40"/><rect x="5" y="4.9" width="8.6" height="1.5" fill="#1d5e56"/><rect x="18.1" y="4.9" width="8.1" height="1.5" fill="#1d5e56"/><rect x="9.8" y="4.9" width="1.4" height="1.5" fill="#ee9b51"/><rect x="22.4" y="4.9" width="1.4" height="1.5" fill="#ee9b51"/><rect x="1.8" y="3.3" width="1.6" height="3.2" fill="#f6a254"/><rect x="14.3" y="3.3" width="3.3" height="3.2" fill="#f6a254"/></pattern><pattern id="pshore" x="250" y="525.1" width="25.76" height="14" patternUnits="userSpaceOnUse"><rect y="9" width="25.76" height="5" fill="#0090de"/><rect y="0" width="25.76" height="2" fill="#ee9b51"/><rect y="5.8" width="25.76" height="3.8" fill="#0090de"/><rect x="2" y="0" width="4.0" height="2.1" fill="#9c4a44"/><rect x="13.1" y="0" width="7.8" height="2.1" fill="#9c4a44"/><rect x="0" y="2" width="25.76" height="2.8" fill="#9c4a44"/><rect x="2.3" y="2.4" width="2.7" height="2.2" fill="#6c2a3a"/><rect x="17.1" y="2.4" width="2.1" height="2.2" fill="#6c2a3a"/><rect x="10" y="3.3" width="5.2" height="1.3" fill="#c86a38"/><rect x="0" y="4.7" width="25.76" height="1.2" fill="#c86a38"/><rect x="3" y="4.7" width="1.6" height="1.2" fill="#6c2a3a"/><rect x="18.1" y="4.7" width="1.6" height="1.2" fill="#6c2a3a"/><rect x="0" y="4.7" width="3.0" height="1.2" fill="#8cf6fc"/><rect x="8.1" y="4.7" width="9.6" height="1.2" fill="#8cf6fc"/><rect x="0" y="5.8" width="25.76" height="2" fill="#0a4a9c"/><rect x="3" y="5.8" width="5.1" height="2" fill="#8cf6fc"/><rect x="3" y="7.8" width="5.1" height="1.8" fill="#0a4a9c"/><rect x="18.1" y="5.8" width="7.8" height="2" fill="#8cf6fc"/><rect x="18.1" y="7.8" width="7.8" height="1.8" fill="#0a4a9c"/></pattern><pattern id="pshoreb" x="250" y="641.1" width="25.76" height="12" patternUnits="userSpaceOnUse"><rect y="6" width="25.76" height="6" fill="#9c4a44"/><rect width="25.76" height="3" fill="#0090de"/><rect x="3" y="0" width="5.1" height="1.7" fill="#0a4a9c"/><rect x="18.1" y="0" width="7.8" height="1.7" fill="#0a4a9c"/><rect x="0" y="1.7" width="25.76" height="1.3" fill="#0a4a9c"/><rect x="3" y="1.7" width="5.1" height="1.3" fill="#8cf6fc"/><rect x="18.1" y="1.7" width="7.8" height="1.3" fill="#8cf6fc"/><rect x="0" y="3" width="25.76" height="2" fill="#8cf6fc"/><rect x="3" y="3" width="5.1" height="2" fill="#e07a3a"/><rect x="3" y="3" width="1.4" height="2" fill="#6c2a3a"/><rect x="18.1" y="3" width="7.8" height="2" fill="#e07a3a"/><rect x="18.1" y="3" width="1.4" height="2" fill="#6c2a3a"/><rect x="0" y="5" width="25.76" height="2.1" fill="#9c4a44"/><rect x="10" y="5.2" width="5.5" height="1" fill="#c86a38"/><rect x="2" y="5.6" width="2.4" height="1" fill="#6c2a3a"/><rect x="17.2" y="5" width="1.4" height="2" fill="#6c2a3a"/></pattern></defs><g shape-rendering="crispEdges"><path d="M250 139.6H383Q392.4 139.6 392.4 149V304.4Q392.4 313.8 383 313.8H250Z" fill="#be6c46" shape-rendering="auto"/><rect x="250.6" y="137.4" width="5.0" height="2.3" fill="#84303e" /><rect x="250.6" y="313.7" width="5.0" height="2.3" fill="#84303e" /><rect x="255.6" y="139.6" width="2.7" height="3.6" fill="#84303e" /><rect x="255.6" y="310.2" width="2.7" height="3.6" fill="#84303e" /><rect x="258.3" y="137.4" width="5.0" height="2.3" fill="#84303e" /><rect x="258.3" y="313.7" width="5.0" height="2.3" fill="#84303e" /><rect x="263.3" y="139.6" width="2.7" height="2.4" fill="#84303e" /><rect x="263.3" y="311.4" width="2.7" height="2.4" fill="#84303e" /><rect x="266.0" y="137.4" width="5.0" height="2.3" fill="#84303e" /><rect x="266.0" y="313.7" width="5.0" height="2.3" fill="#84303e" /><rect x="271.0" y="139.6" width="2.7" height="2.4" fill="#84303e" /><rect x="271.0" y="311.4" width="2.7" height="2.4" fill="#84303e" /><rect x="273.7" y="137.4" width="5.0" height="2.3" fill="#84303e" /><rect x="273.7" y="313.7" width="5.0" height="2.3" fill="#84303e" /><rect x="278.7" y="139.6" width="2.7" height="3.6" fill="#84303e" /><rect x="278.7" y="310.2" width="2.7" height="3.6" fill="#84303e" /><rect x="281.4" y="137.4" width="5.0" height="2.3" fill="#84303e" /><rect x="281.4" y="313.7" width="5.0" height="2.3" fill="#84303e" /><rect x="286.4" y="139.6" width="2.7" height="2.4" fill="#84303e" /><rect x="286.4" y="311.4" width="2.7" height="2.4" fill="#84303e" /><rect x="289.1" y="137.4" width="5.0" height="2.3" fill="#84303e" /><rect x="289.1" y="313.7" width="5.0" height="2.3" fill="#84303e" /><rect x="294.1" y="139.6" width="2.7" height="2.4" fill="#84303e" /><rect x="294.1" y="311.4" width="2.7" height="2.4" fill="#84303e" /><rect x="296.8" y="137.4" width="5.0" height="2.3" fill="#84303e" /><rect x="296.8" y="313.7" width="5.0" height="2.3" fill="#84303e" /><rect x="301.8" y="139.6" width="2.7" height="3.6" fill="#84303e" /><rect x="301.8" y="310.2" width="2.7" height="3.6" fill="#84303e" /><rect x="304.5" y="137.4" width="5.0" height="2.3" fill="#84303e" /><rect x="304.5" y="313.7" width="5.0" height="2.3" fill="#84303e" /><rect x="309.5" y="139.6" width="2.7" height="2.4" fill="#84303e" /><rect x="309.5" y="311.4" width="2.7" height="2.4" fill="#84303e" /><rect x="312.2" y="137.4" width="5.0" height="2.3" fill="#84303e" /><rect x="312.2" y="313.7" width="5.0" height="2.3" fill="#84303e" /><rect x="317.2" y="139.6" width="2.7" height="2.4" fill="#84303e" /><rect x="317.2" y="311.4" width="2.7" height="2.4" fill="#84303e" /><rect x="319.9" y="137.4" width="5.0" height="2.3" fill="#84303e" /><rect x="319.9" y="313.7" width="5.0" height="2.3" fill="#84303e" /><rect x="324.9" y="139.6" width="2.7" height="3.6" fill="#84303e" /><rect x="324.9" y="310.2" width="2.7" height="3.6" fill="#84303e" /><rect x="327.6" y="137.4" width="5.0" height="2.3" fill="#84303e" /><rect x="327.6" y="313.7" width="5.0" height="2.3" fill="#84303e" /><rect x="332.6" y="139.6" width="2.7" height="2.4" fill="#84303e" /><rect x="332.6" y="311.4" width="2.7" height="2.4" fill="#84303e" /><rect x="335.3" y="137.4" width="5.0" height="2.3" fill="#84303e" /><rect x="335.3" y="313.7" width="5.0" height="2.3" fill="#84303e" /><rect x="340.3" y="139.6" width="2.7" height="2.4" fill="#84303e" /><rect x="340.3" y="311.4" width="2.7" height="2.4" fill="#84303e" /><rect x="343.0" y="137.4" width="5.0" height="2.3" fill="#84303e" /><rect x="343.0" y="313.7" width="5.0" height="2.3" fill="#84303e" /><rect x="348.0" y="139.6" width="2.7" height="3.6" fill="#84303e" /><rect x="348.0" y="310.2" width="2.7" height="3.6" fill="#84303e" /><rect x="350.7" y="137.4" width="5.0" height="2.3" fill="#84303e" /><rect x="350.7" y="313.7" width="5.0" height="2.3" fill="#84303e" /><rect x="355.7" y="139.6" width="2.7" height="2.4" fill="#84303e" /><rect x="355.7" y="311.4" width="2.7" height="2.4" fill="#84303e" /><rect x="358.4" y="137.4" width="5.0" height="2.3" fill="#84303e" /><rect x="358.4" y="313.7" width="5.0" height="2.3" fill="#84303e" /><rect x="363.4" y="139.6" width="2.7" height="2.4" fill="#84303e" /><rect x="363.4" y="311.4" width="2.7" height="2.4" fill="#84303e" /><rect x="366.1" y="137.4" width="5.0" height="2.3" fill="#84303e" /><rect x="366.1" y="313.7" width="5.0" height="2.3" fill="#84303e" /><rect x="371.1" y="139.6" width="2.7" height="3.6" fill="#84303e" /><rect x="371.1" y="310.2" width="2.7" height="3.6" fill="#84303e" /><rect x="373.8" y="137.4" width="5.0" height="2.3" fill="#84303e" /><rect x="373.8" y="313.7" width="5.0" height="2.3" fill="#84303e" /><rect x="378.8" y="139.6" width="2.7" height="2.4" fill="#84303e" /><rect x="378.8" y="311.4" width="2.7" height="2.4" fill="#84303e" /><rect x="392.3" y="151.5" width="2.5" height="5.0" fill="#84303e" /><rect x="390.0" y="156.5" width="2.4" height="2.7" fill="#84303e" /><rect x="392.3" y="159.2" width="2.5" height="5.0" fill="#84303e" /><rect x="390.0" y="164.2" width="2.4" height="2.7" fill="#84303e" /><rect x="392.3" y="166.9" width="2.5" height="5.0" fill="#84303e" /><rect x="390.0" y="171.9" width="2.4" height="2.7" fill="#84303e" /><rect x="392.3" y="174.6" width="2.5" height="5.0" fill="#84303e" /><rect x="390.0" y="179.6" width="2.4" height="2.7" fill="#84303e" /><rect x="387.6" y="180.4" width="2.4" height="1.4" fill="#84303e" /><rect x="392.3" y="182.3" width="2.5" height="5.0" fill="#84303e" /><rect x="390.0" y="187.3" width="2.4" height="2.7" fill="#84303e" /><rect x="392.3" y="190.0" width="2.5" height="5.0" fill="#84303e" /><rect x="390.0" y="195.0" width="2.4" height="2.7" fill="#84303e" /><rect x="392.3" y="197.7" width="2.5" height="5.0" fill="#84303e" /><rect x="390.0" y="202.7" width="2.4" height="2.7" fill="#84303e" /><rect x="392.3" y="205.4" width="2.5" height="5.0" fill="#84303e" /><rect x="390.0" y="210.4" width="2.4" height="2.7" fill="#84303e" /><rect x="387.6" y="211.2" width="2.4" height="1.4" fill="#84303e" /><rect x="392.3" y="213.1" width="2.5" height="5.0" fill="#84303e" /><rect x="390.0" y="218.1" width="2.4" height="2.7" fill="#84303e" /><rect x="392.3" y="220.8" width="2.5" height="5.0" fill="#84303e" /><rect x="390.0" y="225.8" width="2.4" height="2.7" fill="#84303e" /><rect x="392.3" y="228.5" width="2.5" height="5.0" fill="#84303e" /><rect x="390.0" y="233.5" width="2.4" height="2.7" fill="#84303e" /><rect x="392.3" y="236.2" width="2.5" height="5.0" fill="#84303e" /><rect x="390.0" y="241.2" width="2.4" height="2.7" fill="#84303e" /><rect x="387.6" y="242.0" width="2.4" height="1.4" fill="#84303e" /><rect x="392.3" y="243.9" width="2.5" height="5.0" fill="#84303e" /><rect x="390.0" y="248.9" width="2.4" height="2.7" fill="#84303e" /><rect x="392.3" y="251.6" width="2.5" height="5.0" fill="#84303e" /><rect x="390.0" y="256.6" width="2.4" height="2.7" fill="#84303e" /><rect x="392.3" y="259.3" width="2.5" height="5.0" fill="#84303e" /><rect x="390.0" y="264.3" width="2.4" height="2.7" fill="#84303e" /><rect x="392.3" y="267.0" width="2.5" height="5.0" fill="#84303e" /><rect x="390.0" y="272.0" width="2.4" height="2.7" fill="#84303e" /><rect x="387.6" y="272.8" width="2.4" height="1.4" fill="#84303e" /><rect x="392.3" y="274.7" width="2.5" height="5.0" fill="#84303e" /><rect x="390.0" y="279.7" width="2.4" height="2.7" fill="#84303e" /><rect x="392.3" y="282.4" width="2.5" height="5.0" fill="#84303e" /><rect x="390.0" y="287.4" width="2.4" height="2.7" fill="#84303e" /><rect x="392.3" y="290.1" width="2.5" height="5.0" fill="#84303e" /><rect x="390.0" y="295.1" width="2.4" height="2.7" fill="#84303e" /><rect x="392.3" y="297.8" width="2.5" height="4.2" fill="#84303e" /><rect x="390.0" y="302.8" width="2.4" height="2.7" fill="#84303e" /><rect x="387.6" y="303.6" width="2.4" height="1.4" fill="#84303e" /><rect x="381.0" y="138.2" width="4.0" height="2.3" fill="#84303e" /><rect x="385.0" y="139.6" width="3.0" height="2.4" fill="#84303e" /><rect x="388.0" y="141.6" width="2.6" height="2.6" fill="#84303e" /><rect x="390.0" y="144.0" width="2.4" height="3.4" fill="#84303e" /><rect x="391.6" y="147.4" width="2.4" height="4.0" fill="#84303e" /><rect x="381.0" y="312.9" width="4.0" height="2.3" fill="#84303e" /><rect x="385.0" y="311.4" width="3.0" height="2.4" fill="#84303e" /><rect x="388.0" y="309.2" width="2.6" height="2.6" fill="#84303e" /><rect x="390.0" y="306.0" width="2.4" height="3.4" fill="#84303e" /><rect x="391.6" y="302.0" width="2.4" height="4.0" fill="#84303e" /><rect x="250" y="424.5" width="634.1" height="104" fill="url(#psand)"/><rect x="250" y="421.8" width="634.1" height="6.5" fill="url(#pgrass)"/><rect x="884.1" y="523.3" width="25.8" height="25.7" fill="#ee9a50" /><rect x="250.0" y="531.0" width="634.1" height="115.0" fill="#0090de" /><rect x="250" y="525.1" width="634.1" height="9.6" fill="url(#pshore)"/><rect x="884.0" y="525.3" width="14.0" height="5.0" fill="#9c4a44" /><rect x="884.0" y="530.3" width="11.0" height="2.2" fill="#84f4fc" /><rect x="884.0" y="532.5" width="9.0" height="1.7" fill="#0090de" /><rect x="884.0" y="531.0" width="16.5" height="18.0" fill="#0090de" /><rect x="884.0" y="530.3" width="14.5" height="2.2" fill="#84f4fc" /><rect x="898.0" y="526.5" width="4.0" height="4.0" fill="#9c4a44" /><rect x="900.5" y="529.0" width="4.0" height="6.0" fill="#9c4a44" /><rect x="902.0" y="533.0" width="4.5" height="16.0" fill="#9c4a44" /><rect x="900.0" y="527.5" width="2.5" height="3.0" fill="#6a2a3c" /><rect x="902.5" y="530.0" width="2.0" height="3.5" fill="#6a2a3c" /><rect x="902.5" y="545.0" width="2.0" height="3.5" fill="#6a2a3c" /><rect x="899.5" y="531.5" width="2.4" height="6.0" fill="#84f4fc" /><rect x="898.0" y="537.0" width="2.0" height="8.0" fill="#0a4ea4" /><rect x="900.0" y="537.5" width="2.2" height="6.5" fill="#b86038" /><rect x="900.2" y="544.0" width="2.2" height="4.0" fill="#84f4fc" /><rect x="898.4" y="532.5" width="1.6" height="4.5" fill="#0a4ea4" /><rect x="250" y="641.1" width="634.1" height="7.1" fill="url(#pshoreb)"/></g><g shape-rendering="crispEdges"><clipPath id="h1w"><polygon points="556,138 569,138 616,184 616,216 509,216 509,184"/></clipPath><g clip-path="url(#h1w)"><rect x="510.0" y="136.0" width="105.0" height="81.0" fill="#3f4358" /><rect x="510.0" y="136.0" width="105.0" height="1.0" fill="#25283a" /><rect x="510.0" y="136.0" width="1.0" height="5.0" fill="#25283a" /><rect x="521.2" y="136.0" width="1.0" height="5.0" fill="#25283a" /><rect x="532.4" y="136.0" width="1.0" height="5.0" fill="#25283a" /><rect x="543.6" y="136.0" width="1.0" height="5.0" fill="#25283a" /><rect x="554.8" y="136.0" width="1.0" height="5.0" fill="#25283a" /><rect x="566.0" y="136.0" width="1.0" height="5.0" fill="#25283a" /><rect x="577.2" y="136.0" width="1.0" height="5.0" fill="#25283a" /><rect x="588.4" y="136.0" width="1.0" height="5.0" fill="#25283a" /><rect x="599.6" y="136.0" width="1.0" height="5.0" fill="#25283a" /><rect x="610.8" y="136.0" width="1.0" height="5.0" fill="#25283a" /><rect x="510.0" y="141.1" width="105.0" height="1.0" fill="#25283a" /><rect x="515.6" y="141.1" width="1.0" height="5.0" fill="#25283a" /><rect x="526.8" y="141.1" width="1.0" height="5.0" fill="#25283a" /><rect x="538.0" y="141.1" width="1.0" height="5.0" fill="#25283a" /><rect x="549.2" y="141.1" width="1.0" height="5.0" fill="#25283a" /><rect x="560.4" y="141.1" width="1.0" height="5.0" fill="#25283a" /><rect x="571.6" y="141.1" width="1.0" height="5.0" fill="#25283a" /><rect x="582.8" y="141.1" width="1.0" height="5.0" fill="#25283a" /><rect x="594.0" y="141.1" width="1.0" height="5.0" fill="#25283a" /><rect x="605.2" y="141.1" width="1.0" height="5.0" fill="#25283a" /><rect x="510.0" y="146.1" width="105.0" height="1.0" fill="#25283a" /><rect x="510.0" y="146.1" width="1.0" height="5.0" fill="#25283a" /><rect x="521.2" y="146.1" width="1.0" height="5.0" fill="#25283a" /><rect x="532.4" y="146.1" width="1.0" height="5.0" fill="#25283a" /><rect x="543.6" y="146.1" width="1.0" height="5.0" fill="#25283a" /><rect x="554.8" y="146.1" width="1.0" height="5.0" fill="#25283a" /><rect x="566.0" y="146.1" width="1.0" height="5.0" fill="#25283a" /><rect x="577.2" y="146.1" width="1.0" height="5.0" fill="#25283a" /><rect x="588.4" y="146.1" width="1.0" height="5.0" fill="#25283a" /><rect x="599.6" y="146.1" width="1.0" height="5.0" fill="#25283a" /><rect x="610.8" y="146.1" width="1.0" height="5.0" fill="#25283a" /><rect x="510.0" y="151.2" width="105.0" height="1.0" fill="#25283a" /><rect x="515.6" y="151.2" width="1.0" height="5.0" fill="#25283a" /><rect x="526.8" y="151.2" width="1.0" height="5.0" fill="#25283a" /><rect x="538.0" y="151.2" width="1.0" height="5.0" fill="#25283a" /><rect x="549.2" y="151.2" width="1.0" height="5.0" fill="#25283a" /><rect x="560.4" y="151.2" width="1.0" height="5.0" fill="#25283a" /><rect x="571.6" y="151.2" width="1.0" height="5.0" fill="#25283a" /><rect x="582.8" y="151.2" width="1.0" height="5.0" fill="#25283a" /><rect x="594.0" y="151.2" width="1.0" height="5.0" fill="#25283a" /><rect x="605.2" y="151.2" width="1.0" height="5.0" fill="#25283a" /><rect x="510.0" y="156.2" width="105.0" height="1.0" fill="#25283a" /><rect x="510.0" y="156.2" width="1.0" height="5.0" fill="#25283a" /><rect x="521.2" y="156.2" width="1.0" height="5.0" fill="#25283a" /><rect x="532.4" y="156.2" width="1.0" height="5.0" fill="#25283a" /><rect x="543.6" y="156.2" width="1.0" height="5.0" fill="#25283a" /><rect x="554.8" y="156.2" width="1.0" height="5.0" fill="#25283a" /><rect x="566.0" y="156.2" width="1.0" height="5.0" fill="#25283a" /><rect x="577.2" y="156.2" width="1.0" height="5.0" fill="#25283a" /><rect x="588.4" y="156.2" width="1.0" height="5.0" fill="#25283a" /><rect x="599.6" y="156.2" width="1.0" height="5.0" fill="#25283a" /><rect x="610.8" y="156.2" width="1.0" height="5.0" fill="#25283a" /><rect x="510.0" y="161.3" width="105.0" height="1.0" fill="#25283a" /><rect x="515.6" y="161.3" width="1.0" height="5.0" fill="#25283a" /><rect x="526.8" y="161.3" width="1.0" height="5.0" fill="#25283a" /><rect x="538.0" y="161.3" width="1.0" height="5.0" fill="#25283a" /><rect x="549.2" y="161.3" width="1.0" height="5.0" fill="#25283a" /><rect x="560.4" y="161.3" width="1.0" height="5.0" fill="#25283a" /><rect x="571.6" y="161.3" width="1.0" height="5.0" fill="#25283a" /><rect x="582.8" y="161.3" width="1.0" height="5.0" fill="#25283a" /><rect x="594.0" y="161.3" width="1.0" height="5.0" fill="#25283a" /><rect x="605.2" y="161.3" width="1.0" height="5.0" fill="#25283a" /><rect x="510.0" y="166.3" width="105.0" height="1.0" fill="#25283a" /><rect x="510.0" y="166.3" width="1.0" height="5.0" fill="#25283a" /><rect x="521.2" y="166.3" width="1.0" height="5.0" fill="#25283a" /><rect x="532.4" y="166.3" width="1.0" height="5.0" fill="#25283a" /><rect x="543.6" y="166.3" width="1.0" height="5.0" fill="#25283a" /><rect x="554.8" y="166.3" width="1.0" height="5.0" fill="#25283a" /><rect x="566.0" y="166.3" width="1.0" height="5.0" fill="#25283a" /><rect x="577.2" y="166.3" width="1.0" height="5.0" fill="#25283a" /><rect x="588.4" y="166.3" width="1.0" height="5.0" fill="#25283a" /><rect x="599.6" y="166.3" width="1.0" height="5.0" fill="#25283a" /><rect x="610.8" y="166.3" width="1.0" height="5.0" fill="#25283a" /><rect x="510.0" y="171.4" width="105.0" height="1.0" fill="#25283a" /><rect x="515.6" y="171.4" width="1.0" height="5.0" fill="#25283a" /><rect x="526.8" y="171.4" width="1.0" height="5.0" fill="#25283a" /><rect x="538.0" y="171.4" width="1.0" height="5.0" fill="#25283a" /><rect x="549.2" y="171.4" width="1.0" height="5.0" fill="#25283a" /><rect x="560.4" y="171.4" width="1.0" height="5.0" fill="#25283a" /><rect x="571.6" y="171.4" width="1.0" height="5.0" fill="#25283a" /><rect x="582.8" y="171.4" width="1.0" height="5.0" fill="#25283a" /><rect x="594.0" y="171.4" width="1.0" height="5.0" fill="#25283a" /><rect x="605.2" y="171.4" width="1.0" height="5.0" fill="#25283a" /><rect x="510.0" y="176.4" width="105.0" height="1.0" fill="#25283a" /><rect x="510.0" y="176.4" width="1.0" height="5.0" fill="#25283a" /><rect x="521.2" y="176.4" width="1.0" height="5.0" fill="#25283a" /><rect x="532.4" y="176.4" width="1.0" height="5.0" fill="#25283a" /><rect x="543.6" y="176.4" width="1.0" height="5.0" fill="#25283a" /><rect x="554.8" y="176.4" width="1.0" height="5.0" fill="#25283a" /><rect x="566.0" y="176.4" width="1.0" height="5.0" fill="#25283a" /><rect x="577.2" y="176.4" width="1.0" height="5.0" fill="#25283a" /><rect x="588.4" y="176.4" width="1.0" height="5.0" fill="#25283a" /><rect x="599.6" y="176.4" width="1.0" height="5.0" fill="#25283a" /><rect x="610.8" y="176.4" width="1.0" height="5.0" fill="#25283a" /><rect x="510.0" y="181.5" width="105.0" height="1.0" fill="#25283a" /><rect x="515.6" y="181.5" width="1.0" height="5.0" fill="#25283a" /><rect x="526.8" y="181.5" width="1.0" height="5.0" fill="#25283a" /><rect x="538.0" y="181.5" width="1.0" height="5.0" fill="#25283a" /><rect x="549.2" y="181.5" width="1.0" height="5.0" fill="#25283a" /><rect x="560.4" y="181.5" width="1.0" height="5.0" fill="#25283a" /><rect x="571.6" y="181.5" width="1.0" height="5.0" fill="#25283a" /><rect x="582.8" y="181.5" width="1.0" height="5.0" fill="#25283a" /><rect x="594.0" y="181.5" width="1.0" height="5.0" fill="#25283a" /><rect x="605.2" y="181.5" width="1.0" height="5.0" fill="#25283a" /><rect x="510.0" y="186.5" width="105.0" height="1.0" fill="#25283a" /><rect x="510.0" y="186.5" width="1.0" height="5.0" fill="#25283a" /><rect x="521.2" y="186.5" width="1.0" height="5.0" fill="#25283a" /><rect x="532.4" y="186.5" width="1.0" height="5.0" fill="#25283a" /><rect x="543.6" y="186.5" width="1.0" height="5.0" fill="#25283a" /><rect x="554.8" y="186.5" width="1.0" height="5.0" fill="#25283a" /><rect x="566.0" y="186.5" width="1.0" height="5.0" fill="#25283a" /><rect x="577.2" y="186.5" width="1.0" height="5.0" fill="#25283a" /><rect x="588.4" y="186.5" width="1.0" height="5.0" fill="#25283a" /><rect x="599.6" y="186.5" width="1.0" height="5.0" fill="#25283a" /><rect x="610.8" y="186.5" width="1.0" height="5.0" fill="#25283a" /><rect x="510.0" y="191.6" width="105.0" height="1.0" fill="#25283a" /><rect x="515.6" y="191.6" width="1.0" height="5.0" fill="#25283a" /><rect x="526.8" y="191.6" width="1.0" height="5.0" fill="#25283a" /><rect x="538.0" y="191.6" width="1.0" height="5.0" fill="#25283a" /><rect x="549.2" y="191.6" width="1.0" height="5.0" fill="#25283a" /><rect x="560.4" y="191.6" width="1.0" height="5.0" fill="#25283a" /><rect x="571.6" y="191.6" width="1.0" height="5.0" fill="#25283a" /><rect x="582.8" y="191.6" width="1.0" height="5.0" fill="#25283a" /><rect x="594.0" y="191.6" width="1.0" height="5.0" fill="#25283a" /><rect x="605.2" y="191.6" width="1.0" height="5.0" fill="#25283a" /><rect x="510.0" y="196.6" width="105.0" height="1.0" fill="#25283a" /><rect x="510.0" y="196.6" width="1.0" height="5.0" fill="#25283a" /><rect x="521.2" y="196.6" width="1.0" height="5.0" fill="#25283a" /><rect x="532.4" y="196.6" width="1.0" height="5.0" fill="#25283a" /><rect x="543.6" y="196.6" width="1.0" height="5.0" fill="#25283a" /><rect x="554.8" y="196.6" width="1.0" height="5.0" fill="#25283a" /><rect x="566.0" y="196.6" width="1.0" height="5.0" fill="#25283a" /><rect x="577.2" y="196.6" width="1.0" height="5.0" fill="#25283a" /><rect x="588.4" y="196.6" width="1.0" height="5.0" fill="#25283a" /><rect x="599.6" y="196.6" width="1.0" height="5.0" fill="#25283a" /><rect x="610.8" y="196.6" width="1.0" height="5.0" fill="#25283a" /><rect x="510.0" y="201.7" width="105.0" height="1.0" fill="#25283a" /><rect x="515.6" y="201.7" width="1.0" height="5.0" fill="#25283a" /><rect x="526.8" y="201.7" width="1.0" height="5.0" fill="#25283a" /><rect x="538.0" y="201.7" width="1.0" height="5.0" fill="#25283a" /><rect x="549.2" y="201.7" width="1.0" height="5.0" fill="#25283a" /><rect x="560.4" y="201.7" width="1.0" height="5.0" fill="#25283a" /><rect x="571.6" y="201.7" width="1.0" height="5.0" fill="#25283a" /><rect x="582.8" y="201.7" width="1.0" height="5.0" fill="#25283a" /><rect x="594.0" y="201.7" width="1.0" height="5.0" fill="#25283a" /><rect x="605.2" y="201.7" width="1.0" height="5.0" fill="#25283a" /><rect x="510.0" y="206.7" width="105.0" height="1.0" fill="#25283a" /><rect x="510.0" y="206.7" width="1.0" height="5.0" fill="#25283a" /><rect x="521.2" y="206.7" width="1.0" height="5.0" fill="#25283a" /><rect x="532.4" y="206.7" width="1.0" height="5.0" fill="#25283a" /><rect x="543.6" y="206.7" width="1.0" height="5.0" fill="#25283a" /><rect x="554.8" y="206.7" width="1.0" height="5.0" fill="#25283a" /><rect x="566.0" y="206.7" width="1.0" height="5.0" fill="#25283a" /><rect x="577.2" y="206.7" width="1.0" height="5.0" fill="#25283a" /><rect x="588.4" y="206.7" width="1.0" height="5.0" fill="#25283a" /><rect x="599.6" y="206.7" width="1.0" height="5.0" fill="#25283a" /><rect x="610.8" y="206.7" width="1.0" height="5.0" fill="#25283a" /><rect x="510.0" y="211.8" width="105.0" height="1.0" fill="#25283a" /><rect x="515.6" y="211.8" width="1.0" height="5.0" fill="#25283a" /><rect x="526.8" y="211.8" width="1.0" height="5.0" fill="#25283a" /><rect x="538.0" y="211.8" width="1.0" height="5.0" fill="#25283a" /><rect x="549.2" y="211.8" width="1.0" height="5.0" fill="#25283a" /><rect x="560.4" y="211.8" width="1.0" height="5.0" fill="#25283a" /><rect x="571.6" y="211.8" width="1.0" height="5.0" fill="#25283a" /><rect x="582.8" y="211.8" width="1.0" height="5.0" fill="#25283a" /><rect x="594.0" y="211.8" width="1.0" height="5.0" fill="#25283a" /><rect x="605.2" y="211.8" width="1.0" height="5.0" fill="#25283a" /><rect x="510.0" y="216.8" width="105.0" height="1.0" fill="#25283a" /><rect x="510.0" y="216.8" width="1.0" height="5.0" fill="#25283a" /><rect x="521.2" y="216.8" width="1.0" height="5.0" fill="#25283a" /><rect x="532.4" y="216.8" width="1.0" height="5.0" fill="#25283a" /><rect x="543.6" y="216.8" width="1.0" height="5.0" fill="#25283a" /><rect x="554.8" y="216.8" width="1.0" height="5.0" fill="#25283a" /><rect x="566.0" y="216.8" width="1.0" height="5.0" fill="#25283a" /><rect x="577.2" y="216.8" width="1.0" height="5.0" fill="#25283a" /><rect x="588.4" y="216.8" width="1.0" height="5.0" fill="#25283a" /><rect x="599.6" y="216.8" width="1.0" height="5.0" fill="#25283a" /><rect x="610.8" y="216.8" width="1.0" height="5.0" fill="#25283a" /></g><polygon points="557,128 498,182 498,190 506,190.5 557,141.5" fill="#1a0a10" shape-rendering="auto"/><polygon points="568,128 627,182 627,190 619,190.5 568,141.5" fill="#1a0a10" shape-rendering="auto"/><path d="M556.5 141L505 191M568.5 141L620 191" stroke="#a04a2a" stroke-width="2.8" fill="none" shape-rendering="auto"/><rect x="515.0" y="225.0" width="95.0" height="41.0" fill="#5b6b9f" /><rect x="515.0" y="225.0" width="4.0" height="41.0" fill="#3b4878" /><rect x="606.0" y="225.0" width="4.0" height="41.0" fill="#3b4878" /><rect x="515.0" y="225.0" width="95.0" height="3.5" fill="#3b4878" /><rect x="506.3" y="189.0" width="9.6" height="77.0" fill="#26101a" /><rect x="507.7" y="189.0" width="6.8" height="77.0" fill="#aa461f" /><rect x="511.3" y="189.0" width="3.0" height="77.0" fill="#7e2e16" /><rect x="609.5" y="189.0" width="9.6" height="77.0" fill="#26101a" /><rect x="610.9" y="189.0" width="6.8" height="77.0" fill="#aa461f" /><rect x="614.5" y="189.0" width="3.0" height="77.0" fill="#7e2e16" /><rect x="499.4" y="214.7" width="125.0" height="11.2" fill="#26101a" /><rect x="501.0" y="216.3" width="121.8" height="7.6" fill="#b24c20" /><rect x="501.0" y="220.8" width="121.8" height="3.1" fill="#7e2e16" /><rect x="498.5" y="189.5" width="8.0" height="4.5" fill="#5a2018" /><rect x="619.0" y="189.5" width="8.0" height="4.5" fill="#5a2018" /><rect x="540.8" y="175.5" width="8.9" height="22.6" fill="#2a3040" /><rect x="542.0" y="176.7" width="6.5" height="20.2" fill="#6c8c98" /><rect x="542.0" y="178.4" width="6.5" height="1.1" fill="#46626e" /><rect x="542.0" y="181.6" width="6.5" height="1.1" fill="#46626e" /><rect x="542.0" y="184.8" width="6.5" height="1.1" fill="#46626e" /><rect x="542.0" y="188.0" width="6.5" height="1.1" fill="#46626e" /><rect x="542.0" y="191.2" width="6.5" height="1.1" fill="#46626e" /><rect x="542.0" y="194.4" width="6.5" height="1.1" fill="#46626e" /><rect x="573.6" y="175.5" width="8.9" height="22.6" fill="#2a3040" /><rect x="574.8" y="176.7" width="6.5" height="20.2" fill="#6c8c98" /><rect x="574.8" y="178.4" width="6.5" height="1.1" fill="#46626e" /><rect x="574.8" y="181.6" width="6.5" height="1.1" fill="#46626e" /><rect x="574.8" y="184.8" width="6.5" height="1.1" fill="#46626e" /><rect x="574.8" y="188.0" width="6.5" height="1.1" fill="#46626e" /><rect x="574.8" y="191.2" width="6.5" height="1.1" fill="#46626e" /><rect x="574.8" y="194.4" width="6.5" height="1.1" fill="#46626e" /><rect x="550.4" y="173.0" width="22.2" height="24.0" fill="#4a1812" /><rect x="551.7" y="174.3" width="19.6" height="21.4" fill="#a03c20" /><rect x="554.0" y="176.6" width="5.3" height="8.4" fill="#30c0e8" /><rect x="554.0" y="176.6" width="2.7" height="8.4" fill="#b8f4ff" /><rect x="554.0" y="188.8" width="5.3" height="4.3" fill="#30c0e8" /><rect x="554.0" y="188.8" width="2.7" height="4.3" fill="#b8f4ff" /><rect x="563.7" y="176.6" width="5.3" height="8.4" fill="#30c0e8" /><rect x="563.7" y="176.6" width="2.7" height="8.4" fill="#b8f4ff" /><rect x="563.7" y="188.8" width="5.3" height="4.3" fill="#30c0e8" /><rect x="563.7" y="188.8" width="2.7" height="4.3" fill="#b8f4ff" /><rect x="539.0" y="230.7" width="45.4" height="35.2" fill="#26101a" /><rect x="540.6" y="232.4" width="42.2" height="33.5" fill="#a6421e" /><rect x="542.5" y="234.5" width="38.4" height="31.4" fill="#7e2e16" /><rect x="543.8" y="235.8" width="35.8" height="30.0" fill="#aa4820" /><rect x="561.0" y="234.5" width="1.4" height="31.4" fill="#3a1410" /><rect x="546.0" y="238.0" width="12.0" height="12.5" fill="#7a2a14" /><rect x="547.6" y="239.6" width="8.8" height="9.3" fill="#b04c22" /><rect x="546.0" y="253.5" width="12.0" height="9.0" fill="#7a2a14" /><rect x="547.6" y="255.1" width="8.8" height="5.8" fill="#c05a26" /><rect x="565.0" y="238.0" width="12.0" height="12.5" fill="#7a2a14" /><rect x="566.6" y="239.6" width="8.8" height="9.3" fill="#b04c22" /><rect x="565.0" y="253.5" width="12.0" height="9.0" fill="#7a2a14" /><rect x="566.6" y="255.1" width="8.8" height="5.8" fill="#c05a26" /><rect x="557.0" y="247.5" width="2.4" height="4.5" fill="#1a1014" /><rect x="557.4" y="248.0" width="1.6" height="3.0" fill="#e8e8e8" /><rect x="563.6" y="247.5" width="2.4" height="4.5" fill="#1a1014" /><rect x="564.0" y="248.0" width="1.6" height="3.0" fill="#e8e8e8" /><rect x="506.3" y="265.7" width="112.8" height="16.3" fill="#3a2230" /><rect x="507.7" y="266.6" width="110.0" height="6.6" fill="#c6a886" /><rect x="507.7" y="266.6" width="110.0" height="1.5" fill="#d8bc98" /><rect x="507.7" y="274.7" width="110.0" height="5.6" fill="#aa8e72" /><rect x="516.5" y="266.6" width="1.2" height="6.6" fill="#6e4a48" /><rect x="529.5" y="266.6" width="1.2" height="6.6" fill="#6e4a48" /><rect x="596.0" y="266.6" width="1.2" height="6.6" fill="#6e4a48" /><rect x="607.5" y="266.6" width="1.2" height="6.6" fill="#6e4a48" /><rect x="510.0" y="274.7" width="1.2" height="5.6" fill="#6e4a48" /><rect x="522.5" y="274.7" width="1.2" height="5.6" fill="#6e4a48" /><rect x="535.5" y="274.7" width="1.2" height="5.6" fill="#6e4a48" /><rect x="588.5" y="274.7" width="1.2" height="5.6" fill="#6e4a48" /><rect x="600.0" y="274.7" width="1.2" height="5.6" fill="#6e4a48" /><rect x="614.0" y="274.7" width="1.2" height="5.6" fill="#6e4a48" /><rect x="540.0" y="265.7" width="43.0" height="17.8" fill="#3a2230" /><rect x="541.2" y="266.2" width="40.6" height="6.4" fill="#d8c09c" /><rect x="541.2" y="271.0" width="40.6" height="1.6" fill="#a88a70" /><rect x="541.2" y="273.8" width="40.6" height="6.2" fill="#d0b690" /><rect x="541.2" y="278.6" width="40.6" height="1.4" fill="#a88a70" /><rect x="540.0" y="280.6" width="43.0" height="2.9" fill="#5a3a40" /><clipPath id="h1l"><polygon points="498.3,104.8 546.0,58.0 555.5,58.0 555.5,131.5 498.3,185.8"/></clipPath><g clip-path="url(#h1l)"><polygon points="498.3,104.8 546.0,58.0 555.5,58.0 555.5,131.5 498.3,185.8" fill="#cc4618"/><rect x="505.7" y="58.0" width="2.3" height="127.8" fill="#e2681c" /><rect x="517.0" y="58.0" width="2.3" height="127.8" fill="#e2681c" /><rect x="528.3" y="58.0" width="2.3" height="127.8" fill="#e2681c" /><rect x="539.5" y="58.0" width="2.3" height="127.8" fill="#e2681c" /><rect x="550.8" y="58.0" width="2.3" height="127.8" fill="#e2681c" /><rect x="562.0" y="58.0" width="2.3" height="127.8" fill="#e2681c" /><path d="M498.3 76.0L555.5 46.3M498.3 98.0L555.5 68.3M498.3 120.0L555.5 90.3M498.3 142.0L555.5 112.3M498.3 164.0L555.5 134.3M498.3 186.0L555.5 156.3M498.3 208.0L555.5 178.3" stroke="#8c1c10" stroke-width="1.5" fill="none" shape-rendering="auto"/><rect x="497.6" y="58.0" width="1.4" height="127.8" fill="#3a0c10" /><rect x="508.9" y="58.0" width="1.4" height="127.8" fill="#3a0c10" /><rect x="520.1" y="58.0" width="1.4" height="127.8" fill="#3a0c10" /><rect x="531.4" y="58.0" width="1.4" height="127.8" fill="#3a0c10" /><rect x="542.6" y="58.0" width="1.4" height="127.8" fill="#3a0c10" /><rect x="553.9" y="58.0" width="1.4" height="127.8" fill="#3a0c10" /></g><clipPath id="h1r"><polygon points="626.5,104.4 579.0,58.0 569.0,58.0 569.0,131.5 626.5,185.8"/></clipPath><g clip-path="url(#h1r)"><polygon points="626.5,104.4 579.0,58.0 569.0,58.0 569.0,131.5 626.5,185.8" fill="#962c10"/><rect x="570.7" y="58.0" width="2.3" height="127.8" fill="#d43a1e" /><rect x="582.1" y="58.0" width="2.3" height="127.8" fill="#d43a1e" /><rect x="593.5" y="58.0" width="2.3" height="127.8" fill="#d43a1e" /><rect x="604.9" y="58.0" width="2.3" height="127.8" fill="#d43a1e" /><rect x="616.3" y="58.0" width="2.3" height="127.8" fill="#d43a1e" /><rect x="627.6" y="58.0" width="2.3" height="127.8" fill="#d43a1e" /><path d="M569.0 29.7L626.5 59.6M569.0 51.7L626.5 81.6M569.0 73.7L626.5 103.6M569.0 95.7L626.5 125.6M569.0 117.7L626.5 147.6M569.0 139.7L626.5 169.6M569.0 161.7L626.5 191.6M569.0 183.7L626.5 213.6" stroke="#4e120a" stroke-width="1.5" fill="none" shape-rendering="auto"/><rect x="568.9" y="58.0" width="1.4" height="127.8" fill="#2e0a0c" /><rect x="580.3" y="58.0" width="1.4" height="127.8" fill="#2e0a0c" /><rect x="591.7" y="58.0" width="1.4" height="127.8" fill="#2e0a0c" /><rect x="603.0" y="58.0" width="1.4" height="127.8" fill="#2e0a0c" /><rect x="614.4" y="58.0" width="1.4" height="127.8" fill="#2e0a0c" /><rect x="625.8" y="58.0" width="1.4" height="127.8" fill="#2e0a0c" /></g><path d="M498.3 104.8L546 58M626.5 104.4L579 58" stroke="#2a0a0e" stroke-width="1.8" fill="none" shape-rendering="auto"/><rect x="497.6" y="104.5" width="1.5" height="82.0" fill="#3a0c10" /><rect x="625.8" y="104.5" width="1.5" height="82.0" fill="#2e0a0c" /><rect x="554.6" y="58.0" width="15.0" height="82.5" fill="#2a0a0e" /><rect x="556.0" y="58.0" width="5.6" height="73.0" fill="#ba5222" /><rect x="561.6" y="58.0" width="4.0" height="73.0" fill="#8c3a20" /><rect x="565.6" y="58.0" width="3.4" height="73.0" fill="#4a1a1c" /><rect x="555.6" y="131.0" width="13.4" height="9.6" fill="#3a1410" /><rect x="556.8" y="132.2" width="11.0" height="6.6" fill="#e08830" /><rect x="556.8" y="136.0" width="11.0" height="1.2" fill="#b86420" /><rect x="517.6" y="94.2" width="23.2" height="19.0" fill="#26141c" /><rect x="519.0" y="95.4" width="20.4" height="16.4" fill="#d8c8a2" /><rect x="519.0" y="108.4" width="20.4" height="3.4" fill="#b8a480" /><rect x="522.0" y="98.4" width="14.4" height="7.8" fill="#30202c" /><rect x="522.0" y="102.0" width="14.4" height="4.2" fill="#120c14" /><clipPath id="h1c"><polygon points="519.5,113.2 539.6,113.2 539.6,123 520.5,139.2 519.5,139.2"/></clipPath><g clip-path="url(#h1c)"><rect x="519.0" y="113.0" width="21.0" height="27.0" fill="#3a2630" /><rect x="520.2" y="114.4" width="3.6" height="4.6" fill="#c8b08c" /><rect x="525.4" y="114.4" width="7.0" height="4.6" fill="#a89070" /><rect x="534.0" y="114.4" width="3.4" height="4.6" fill="#c8b08c" /><rect x="520.2" y="120.6" width="7.2" height="4.6" fill="#a89070" /><rect x="529.0" y="120.6" width="7.6" height="4.6" fill="#c8b08c" /><rect x="520.2" y="126.8" width="3.4" height="4.6" fill="#c8b08c" /><rect x="525.2" y="126.8" width="5.0" height="4.6" fill="#a89070" /><rect x="520.2" y="133.0" width="4.0" height="4.6" fill="#a89070" /></g></g><g shape-rendering="crispEdges"><polygon points="1128.8,293 1178,344 1080,344" fill="#f6a2bc" shape-rendering="auto"/><polygon points="1128.8,296 1158,327 1100,327" fill="#fcc0d2" shape-rendering="auto"/><polygon points="1125,288 1065,340 1065,350 1076,350 1125,304" fill="#2a0e0c" shape-rendering="auto"/><polygon points="1133,288 1193,340 1193,350 1182,350 1133,304" fill="#2a0e0c" shape-rendering="auto"/><path d="M1125 301L1072 350M1133 301L1186 350" stroke="#94401e" stroke-width="3.4" fill="none" shape-rendering="auto"/><path d="M1112.5 302Q1118 314 1126 318M1145.5 302Q1140 314 1132 318" stroke="#8a3a1c" stroke-width="4" fill="none" shape-rendering="auto"/><rect x="1123.2" y="294.0" width="11.8" height="52.0" fill="#2a0e0c" /><rect x="1124.6" y="294.0" width="7.2" height="52.0" fill="#98401e" /><rect x="1131.8" y="294.0" width="2.0" height="52.0" fill="#5e2410" /><rect x="1097.5" y="319.4" width="23.0" height="22.0" fill="#3a140e" /><rect x="1098.8" y="320.7" width="20.4" height="19.4" fill="#7c3018" /><rect x="1101.9" y="323.8" width="4.4" height="5.1" fill="#38b4dc" /><rect x="1101.9" y="323.8" width="2.2" height="5.1" fill="#8cecf8" /><rect x="1101.9" y="331.9" width="4.4" height="5.1" fill="#38b4dc" /><rect x="1101.9" y="331.9" width="2.2" height="5.1" fill="#8cecf8" /><rect x="1110.6" y="323.8" width="4.8" height="5.1" fill="#38b4dc" /><rect x="1110.6" y="323.8" width="2.4" height="5.1" fill="#8cecf8" /><rect x="1110.6" y="331.9" width="4.8" height="5.1" fill="#38b4dc" /><rect x="1110.6" y="331.9" width="2.4" height="5.1" fill="#8cecf8" /><rect x="1098.3" y="339.4" width="21.4" height="2.0" fill="#2a0e0c" /><rect x="1137.6" y="319.4" width="23.0" height="22.0" fill="#3a140e" /><rect x="1138.9" y="320.7" width="20.4" height="19.4" fill="#7c3018" /><rect x="1142.0" y="323.8" width="4.4" height="5.1" fill="#38b4dc" /><rect x="1142.0" y="323.8" width="2.2" height="5.1" fill="#8cecf8" /><rect x="1142.0" y="331.9" width="4.4" height="5.1" fill="#38b4dc" /><rect x="1142.0" y="331.9" width="2.2" height="5.1" fill="#8cecf8" /><rect x="1150.7" y="323.8" width="4.8" height="5.1" fill="#38b4dc" /><rect x="1150.7" y="323.8" width="2.4" height="5.1" fill="#8cecf8" /><rect x="1150.7" y="331.9" width="4.8" height="5.1" fill="#38b4dc" /><rect x="1150.7" y="331.9" width="2.4" height="5.1" fill="#8cecf8" /><rect x="1138.4" y="339.4" width="21.4" height="2.0" fill="#2a0e0c" /><rect x="1081.3" y="353.0" width="95.7" height="38.0" fill="#b26a5a" /><rect x="1085.6" y="357.6" width="86.4" height="32.0" fill="#f8dcc2" /><rect x="1073.1" y="353.0" width="8.3" height="41.5" fill="#2a0e0c" /><rect x="1074.4" y="353.0" width="5.7" height="41.5" fill="#a0441e" /><rect x="1077.7" y="353.0" width="2.4" height="41.5" fill="#6e2810" /><rect x="1177.0" y="353.0" width="8.3" height="41.5" fill="#2a0e0c" /><rect x="1178.3" y="353.0" width="5.7" height="41.5" fill="#a0441e" /><rect x="1181.6" y="353.0" width="2.4" height="41.5" fill="#6e2810" /><rect x="1068.0" y="343.8" width="122.0" height="9.6" fill="#2a0e0c" /><rect x="1069.4" y="345.2" width="119.2" height="4.6" fill="#9c421e" /><rect x="1069.4" y="349.6" width="119.2" height="2.0" fill="#6a2810" /><rect x="1065.3" y="345.0" width="4.0" height="6.0" fill="#2a0e0c" /><rect x="1189.0" y="345.0" width="4.0" height="6.0" fill="#2a0e0c" /><rect x="1087.3" y="361.0" width="10.2" height="25.3" fill="#56184a" /><rect x="1088.6" y="362.3" width="7.6" height="22.7" fill="#f290b2" /><rect x="1088.6" y="364.2" width="7.6" height="1.3" fill="#cc5e8e" /><rect x="1088.6" y="367.7" width="7.6" height="1.3" fill="#cc5e8e" /><rect x="1088.6" y="371.2" width="7.6" height="1.3" fill="#cc5e8e" /><rect x="1088.6" y="374.7" width="7.6" height="1.3" fill="#cc5e8e" /><rect x="1088.6" y="378.2" width="7.6" height="1.3" fill="#cc5e8e" /><rect x="1088.6" y="381.7" width="7.6" height="1.3" fill="#cc5e8e" /><rect x="1121.0" y="361.0" width="10.2" height="25.3" fill="#56184a" /><rect x="1122.3" y="362.3" width="7.6" height="22.7" fill="#f290b2" /><rect x="1122.3" y="364.2" width="7.6" height="1.3" fill="#cc5e8e" /><rect x="1122.3" y="367.7" width="7.6" height="1.3" fill="#cc5e8e" /><rect x="1122.3" y="371.2" width="7.6" height="1.3" fill="#cc5e8e" /><rect x="1122.3" y="374.7" width="7.6" height="1.3" fill="#cc5e8e" /><rect x="1122.3" y="378.2" width="7.6" height="1.3" fill="#cc5e8e" /><rect x="1122.3" y="381.7" width="7.6" height="1.3" fill="#cc5e8e" /><rect x="1097.5" y="358.8" width="22.0" height="25.0" fill="#3a140e" /><rect x="1098.8" y="360.1" width="19.4" height="22.4" fill="#7c3018" /><rect x="1101.9" y="363.8" width="4.4" height="8.2" fill="#38b4dc" /><rect x="1101.9" y="363.8" width="2.2" height="8.2" fill="#8cecf8" /><rect x="1101.9" y="375.1" width="4.4" height="5.0" fill="#38b4dc" /><rect x="1101.9" y="375.1" width="2.2" height="5.0" fill="#8cecf8" /><rect x="1109.8" y="363.8" width="5.1" height="8.2" fill="#38b4dc" /><rect x="1109.8" y="363.8" width="2.5" height="8.2" fill="#8cecf8" /><rect x="1109.8" y="375.1" width="5.1" height="5.0" fill="#38b4dc" /><rect x="1109.8" y="375.1" width="2.5" height="5.0" fill="#8cecf8" /><rect x="1143.4" y="369.5" width="23.6" height="25.0" fill="#5c2410" /><rect x="1145.4" y="370.0" width="19.6" height="24.5" fill="#8c3e1e" /><rect x="1154.6" y="370.0" width="1.3" height="24.5" fill="#4a1808" /><rect x="1149.8" y="370.4" width="2.2" height="9.6" fill="#48c4ec" /><rect x="1158.0" y="370.4" width="2.2" height="9.6" fill="#48c4ec" /><rect x="1149.8" y="374.0" width="2.2" height="3.0" fill="#b8f4ff" /><rect x="1158.0" y="374.0" width="2.2" height="3.0" fill="#b8f4ff" /><rect x="1147.4" y="382.6" width="5.4" height="7.0" fill="#6a2c14" /><rect x="1157.2" y="382.6" width="5.4" height="7.0" fill="#6a2c14" /><rect x="1161.0" y="376.3" width="2.3" height="4.0" fill="#2a1a1a" /><rect x="1161.4" y="376.6" width="1.6" height="2.8" fill="#c8c8c8" /><rect x="1139.0" y="358.2" width="31.7" height="10.6" fill="#3a1420" /><rect x="1140.2" y="359.2" width="3.3" height="8.4" fill="#f4a4b8" /><rect x="1143.5" y="359.2" width="3.3" height="8.4" fill="#ffffff" /><rect x="1146.8" y="359.2" width="3.3" height="8.4" fill="#ee8ca6" /><rect x="1150.1" y="359.2" width="3.3" height="8.4" fill="#ffffff" /><rect x="1153.4" y="359.2" width="3.3" height="8.4" fill="#ee8ca6" /><rect x="1156.7" y="359.2" width="3.3" height="8.4" fill="#ffffff" /><rect x="1160.0" y="359.2" width="3.3" height="8.4" fill="#ee8ca6" /><rect x="1163.3" y="359.2" width="3.3" height="8.4" fill="#ffffff" /><rect x="1166.6" y="359.2" width="3.3" height="8.4" fill="#f4a4b8" /><rect x="1140.2" y="359.2" width="29.7" height="2.2" fill="#b8c4e0" fill-opacity=".55" /><rect x="1140.2" y="366.2" width="29.7" height="1.6" fill="#f6b4c6" /><rect x="1081.3" y="390.0" width="61.3" height="4.5" fill="#4a1a10" /><rect x="1167.6" y="390.0" width="9.6" height="4.5" fill="#4a1a10" /><rect x="1082.0" y="391.2" width="60.0" height="1.6" fill="#98401e" /><rect x="1168.0" y="391.2" width="8.5" height="1.6" fill="#98401e" /><clipPath id="h2l"><polygon points="1065.3,260.0 1122.0,203.4 1123.5,203.4 1123.5,294.5 1065.3,346.5"/></clipPath><g clip-path="url(#h2l)"><polygon points="1065.3,260.0 1122.0,203.4 1123.5,203.4 1123.5,294.5 1065.3,346.5" fill="#86381c"/><rect x="1069.5" y="203.4" width="2.0" height="143.1" fill="#a64c1e" /><rect x="1077.7" y="203.4" width="2.0" height="143.1" fill="#a64c1e" /><rect x="1085.8" y="203.4" width="2.0" height="143.1" fill="#a64c1e" /><rect x="1093.9" y="203.4" width="2.0" height="143.1" fill="#a64c1e" /><rect x="1102.0" y="203.4" width="2.0" height="143.1" fill="#a64c1e" /><rect x="1110.2" y="203.4" width="2.0" height="143.1" fill="#a64c1e" /><rect x="1118.3" y="203.4" width="2.0" height="143.1" fill="#a64c1e" /><rect x="1126.4" y="203.4" width="2.0" height="143.1" fill="#a64c1e" /><path d="M1065.3 202.0L1123.5 168.2M1065.3 218.0L1123.5 184.2M1065.3 234.0L1123.5 200.2M1065.3 250.0L1123.5 216.2M1065.3 266.0L1123.5 232.2M1065.3 282.0L1123.5 248.2M1065.3 298.0L1123.5 264.2M1065.3 314.0L1123.5 280.2M1065.3 330.0L1123.5 296.2M1065.3 346.0L1123.5 312.2M1065.3 362.0L1123.5 328.2M1065.3 378.0L1123.5 344.2" stroke="#521e10" stroke-width="1.5" fill="none" shape-rendering="auto"/><rect x="1064.6" y="203.4" width="1.4" height="143.1" fill="#220a0c" /><rect x="1072.7" y="203.4" width="1.4" height="143.1" fill="#220a0c" /><rect x="1080.9" y="203.4" width="1.4" height="143.1" fill="#220a0c" /><rect x="1089.0" y="203.4" width="1.4" height="143.1" fill="#220a0c" /><rect x="1097.1" y="203.4" width="1.4" height="143.1" fill="#220a0c" /><rect x="1105.3" y="203.4" width="1.4" height="143.1" fill="#220a0c" /><rect x="1113.4" y="203.4" width="1.4" height="143.1" fill="#220a0c" /><rect x="1121.5" y="203.4" width="1.4" height="143.1" fill="#220a0c" /></g><clipPath id="h2r"><polygon points="1192.8,260.6 1136.5,204.4 1134.5,204.4 1134.5,294.5 1192.8,346.5"/></clipPath><g clip-path="url(#h2r)"><polygon points="1192.8,260.6 1136.5,204.4 1134.5,204.4 1134.5,294.5 1192.8,346.5" fill="#6a2a18"/><rect x="1137.3" y="204.4" width="2.1" height="142.1" fill="#82361c" /><rect x="1145.3" y="204.4" width="2.1" height="142.1" fill="#82361c" /><rect x="1153.4" y="204.4" width="2.1" height="142.1" fill="#82361c" /><rect x="1161.4" y="204.4" width="2.1" height="142.1" fill="#82361c" /><rect x="1169.5" y="204.4" width="2.1" height="142.1" fill="#82361c" /><rect x="1177.5" y="204.4" width="2.1" height="142.1" fill="#82361c" /><rect x="1185.6" y="204.4" width="2.1" height="142.1" fill="#82361c" /><rect x="1193.6" y="204.4" width="2.1" height="142.1" fill="#82361c" /><path d="M1134.5 179.0L1192.8 212.8M1134.5 195.0L1192.8 228.8M1134.5 211.0L1192.8 244.8M1134.5 227.0L1192.8 260.8M1134.5 243.0L1192.8 276.8M1134.5 259.0L1192.8 292.8M1134.5 275.0L1192.8 308.8M1134.5 291.0L1192.8 324.8M1134.5 307.0L1192.8 340.8M1134.5 323.0L1192.8 356.8M1134.5 339.0L1192.8 372.8" stroke="#34100c" stroke-width="1.5" fill="none" shape-rendering="auto"/><rect x="1135.6" y="204.4" width="1.4" height="142.1" fill="#1c080a" /><rect x="1143.6" y="204.4" width="1.4" height="142.1" fill="#1c080a" /><rect x="1151.7" y="204.4" width="1.4" height="142.1" fill="#1c080a" /><rect x="1159.7" y="204.4" width="1.4" height="142.1" fill="#1c080a" /><rect x="1167.8" y="204.4" width="1.4" height="142.1" fill="#1c080a" /><rect x="1175.8" y="204.4" width="1.4" height="142.1" fill="#1c080a" /><rect x="1183.9" y="204.4" width="1.4" height="142.1" fill="#1c080a" /><rect x="1191.9" y="204.4" width="1.4" height="142.1" fill="#1c080a" /></g><path d="M1065.3 260L1122.5 203M1192.8 260.6L1136 204" stroke="#1e080a" stroke-width="1.9" fill="none" shape-rendering="auto"/><rect x="1064.6" y="259.6" width="1.5" height="87.0" fill="#220a0c" /><rect x="1192.1" y="260.0" width="1.5" height="87.0" fill="#1c080a" /><rect x="1122.2" y="203.1" width="14.2" height="92.0" fill="#1e080a" /><rect x="1123.4" y="204.3" width="5.0" height="83.0" fill="#b6501e" /><rect x="1128.4" y="204.3" width="4.4" height="83.0" fill="#8a3a1e" /><rect x="1132.8" y="204.3" width="2.4" height="83.0" fill="#4e1c14" /><rect x="1122.8" y="286.8" width="12.4" height="8.6" fill="#3a1410" /><rect x="1124.0" y="287.8" width="10.0" height="6.4" fill="#d87a28" /><rect x="1124.0" y="291.8" width="10.0" height="1.2" fill="#a85a1c" /><rect x="1084.4" y="248.8" width="23.1" height="18.4" fill="#1e1014" /><rect x="1085.8" y="250.0" width="20.3" height="15.8" fill="#d8c8a2" /><rect x="1085.8" y="262.6" width="20.3" height="3.2" fill="#b8a480" /><rect x="1089.4" y="253.2" width="13.8" height="7.6" fill="#30242e" /><rect x="1089.4" y="256.6" width="13.8" height="4.2" fill="#141016" /><clipPath id="h2c"><polygon points="1086.9,267.6 1105.2,267.6 1105.2,276 1088,293.8 1086.9,293.8"/></clipPath><g clip-path="url(#h2c)"><rect x="1086.0" y="267.0" width="20.0" height="28.0" fill="#34222c" /><rect x="1087.6" y="269.0" width="3.2" height="4.6" fill="#b8a080" /><rect x="1092.3" y="269.0" width="6.4" height="4.6" fill="#988068" /><rect x="1100.2" y="269.0" width="3.2" height="4.6" fill="#b8a080" /><rect x="1087.6" y="275.2" width="6.6" height="4.6" fill="#988068" /><rect x="1095.7" y="275.2" width="7.0" height="4.6" fill="#b8a080" /><rect x="1087.6" y="281.4" width="3.0" height="4.6" fill="#b8a080" /><rect x="1092.1" y="281.4" width="4.6" height="4.6" fill="#988068" /><rect x="1087.6" y="287.6" width="3.6" height="4.6" fill="#988068" /></g></g><rect x="1143.2" y="369.6" width="24" height="24.7" fill="none" stroke="#ee1c1c" stroke-width="1.3"/><g transform="translate(359.1,410.9) scale(1.61)" shape-rendering="crispEdges"><rect x="3" y="0" width="4" height="1.05" fill="#101018"/><rect x="2" y="1" width="8" height="1.05" fill="#101018"/><rect x="1" y="2" width="6" height="1.05" fill="#101018"/><rect x="7" y="2" width="3" height="1.05" fill="#3c3c4c"/><rect x="10" y="2" width="1" height="1.05" fill="#101018"/><rect x="1" y="3" width="5" height="1.05" fill="#101018"/><rect x="6" y="3" width="5" height="1.05" fill="#3c3c4c"/><rect x="11" y="3" width="1" height="1.05" fill="#101018"/><rect x="0" y="4" width="5" height="1.05" fill="#101018"/><rect x="5" y="4" width="4" height="1.05" fill="#3c3c4c"/><rect x="9" y="4" width="4" height="1.05" fill="#101018"/><rect x="0" y="5" width="13" height="1.05" fill="#101018"/><rect x="1" y="6" width="4" height="1.05" fill="#101018"/><rect x="5" y="6" width="1" height="1.05" fill="#f4d0b0"/><rect x="6" y="6" width="1" height="1.05" fill="#101018"/><rect x="7" y="6" width="2" height="1.05" fill="#f4d0b0"/><rect x="9" y="6" width="4" height="1.05" fill="#101018"/><rect x="1" y="7" width="3" height="1.05" fill="#101018"/><rect x="4" y="7" width="1" height="1.05" fill="#ffffff"/><rect x="5" y="7" width="1" height="1.05" fill="#3878c8"/><rect x="6" y="7" width="2" height="1.05" fill="#f4d0b0"/><rect x="8" y="7" width="1" height="1.05" fill="#3878c8"/><rect x="9" y="7" width="1" height="1.05" fill="#ffffff"/><rect x="10" y="7" width="2" height="1.05" fill="#101018"/><rect x="2" y="8" width="2" height="1.05" fill="#101018"/><rect x="4" y="8" width="6" height="1.05" fill="#f4d0b0"/><rect x="10" y="8" width="1" height="1.05" fill="#101018"/><rect x="3" y="9" width="1" height="1.05" fill="#101018"/><rect x="4" y="9" width="5" height="1.05" fill="#f4d0b0"/><rect x="9" y="9" width="1" height="1.05" fill="#101018"/><rect x="3" y="10" width="7" height="1.05" fill="#20a8e0"/><rect x="2" y="11" width="1" height="1.05" fill="#101018"/><rect x="3" y="11" width="2" height="1.05" fill="#20a8e0"/><rect x="5" y="11" width="3" height="1.05" fill="#1c3c90"/><rect x="8" y="11" width="2" height="1.05" fill="#20a8e0"/><rect x="10" y="11" width="1" height="1.05" fill="#101018"/><rect x="1" y="12" width="1" height="1.05" fill="#101018"/><rect x="2" y="12" width="1" height="1.05" fill="#f4d0b0"/><rect x="3" y="12" width="1" height="1.05" fill="#20a8e0"/><rect x="4" y="12" width="5" height="1.05" fill="#1c3c90"/><rect x="9" y="12" width="1" height="1.05" fill="#20a8e0"/><rect x="10" y="12" width="1" height="1.05" fill="#f4d0b0"/><rect x="11" y="12" width="1" height="1.05" fill="#101018"/><rect x="1" y="13" width="1" height="1.05" fill="#101018"/><rect x="2" y="13" width="1" height="1.05" fill="#f4d0b0"/><rect x="3" y="13" width="7" height="1.05" fill="#1c3c90"/><rect x="10" y="13" width="1" height="1.05" fill="#f4d0b0"/><rect x="11" y="13" width="1" height="1.05" fill="#101018"/><rect x="2" y="14" width="2" height="1.05" fill="#101018"/><rect x="4" y="14" width="5" height="1.05" fill="#1c3c90"/><rect x="9" y="14" width="2" height="1.05" fill="#101018"/><rect x="3" y="15" width="1" height="1.05" fill="#101018"/><rect x="4" y="15" width="2" height="1.05" fill="#1c3c90"/><rect x="6" y="15" width="1" height="1.05" fill="#101018"/><rect x="7" y="15" width="2" height="1.05" fill="#1c3c90"/><rect x="9" y="15" width="1" height="1.05" fill="#101018"/><rect x="3" y="16" width="1" height="1.05" fill="#101018"/><rect x="4" y="16" width="2" height="1.05" fill="#1c3c90"/><rect x="6" y="16" width="1" height="1.05" fill="#101018"/><rect x="7" y="16" width="2" height="1.05" fill="#1c3c90"/><rect x="9" y="16" width="1" height="1.05" fill="#101018"/><rect x="3" y="17" width="1" height="1.05" fill="#101018"/><rect x="4" y="17" width="2" height="1.05" fill="#1c3c90"/><rect x="6" y="17" width="1" height="1.05" fill="#101018"/><rect x="7" y="17" width="2" height="1.05" fill="#1c3c90"/><rect x="9" y="17" width="1" height="1.05" fill="#101018"/><rect x="3" y="18" width="3" height="1.05" fill="#f4d0b0"/><rect x="7" y="18" width="3" height="1.05" fill="#f4d0b0"/><rect x="3" y="19" width="3" height="1.05" fill="#101018"/><rect x="7" y="19" width="4" height="1.05" fill="#101018"/></g><g transform="translate(618.9,311.1) scale(1.61)" shape-rendering="crispEdges"><rect x="3" y="0" width="5" height="1.05" fill="#a81c10"/><rect x="1" y="1" width="1" height="1.05" fill="#a81c10"/><rect x="2" y="1" width="7" height="1.05" fill="#f48c18"/><rect x="9" y="1" width="1" height="1.05" fill="#a81c10"/><rect x="1" y="2" width="1" height="1.05" fill="#a81c10"/><rect x="2" y="2" width="2" height="1.05" fill="#ffd828"/><rect x="4" y="2" width="3" height="1.05" fill="#f48c18"/><rect x="7" y="2" width="2" height="1.05" fill="#ffd828"/><rect x="9" y="2" width="1" height="1.05" fill="#a81c10"/><rect x="0" y="3" width="6" height="1.05" fill="#f48c18"/><rect x="6" y="3" width="1" height="1.05" fill="#fff6ee"/><rect x="7" y="3" width="4" height="1.05" fill="#f48c18"/><rect x="0" y="4" width="6" height="1.05" fill="#f48c18"/><rect x="6" y="4" width="1" height="1.05" fill="#fff6ee"/><rect x="7" y="4" width="4" height="1.05" fill="#f48c18"/><rect x="0" y="5" width="3" height="1.05" fill="#f48c18"/><rect x="3" y="5" width="2" height="1.05" fill="#140c10"/><rect x="5" y="5" width="1" height="1.05" fill="#f8c8a0"/><rect x="6" y="5" width="2" height="1.05" fill="#140c10"/><rect x="8" y="5" width="3" height="1.05" fill="#f48c18"/><rect x="0" y="6" width="3" height="1.05" fill="#f48c18"/><rect x="3" y="6" width="1" height="1.05" fill="#fff6ee"/><rect x="4" y="6" width="1" height="1.05" fill="#30b030"/><rect x="5" y="6" width="1" height="1.05" fill="#f8c8a0"/><rect x="6" y="6" width="1" height="1.05" fill="#30b030"/><rect x="7" y="6" width="1" height="1.05" fill="#fff6ee"/><rect x="8" y="6" width="3" height="1.05" fill="#f48c18"/><rect x="0" y="7" width="3" height="1.05" fill="#f48c18"/><rect x="3" y="7" width="1" height="1.05" fill="#fff6ee"/><rect x="4" y="7" width="1" height="1.05" fill="#30b030"/><rect x="5" y="7" width="1" height="1.05" fill="#f8c8a0"/><rect x="6" y="7" width="1" height="1.05" fill="#30b030"/><rect x="7" y="7" width="1" height="1.05" fill="#fff6ee"/><rect x="8" y="7" width="3" height="1.05" fill="#f48c18"/><rect x="0" y="8" width="3" height="1.05" fill="#f48c18"/><rect x="3" y="8" width="1" height="1.05" fill="#140c10"/><rect x="4" y="8" width="3" height="1.05" fill="#f8c8a0"/><rect x="7" y="8" width="1" height="1.05" fill="#140c10"/><rect x="8" y="8" width="3" height="1.05" fill="#f48c18"/><rect x="0" y="9" width="1" height="1.05" fill="#a81c10"/><rect x="1" y="9" width="2" height="1.05" fill="#f48c18"/><rect x="3" y="9" width="1" height="1.05" fill="#140c10"/><rect x="4" y="9" width="3" height="1.05" fill="#f8c8a0"/><rect x="7" y="9" width="1" height="1.05" fill="#140c10"/><rect x="8" y="9" width="2" height="1.05" fill="#f48c18"/><rect x="10" y="9" width="1" height="1.05" fill="#a81c10"/><rect x="0" y="10" width="1" height="1.05" fill="#a81c10"/><rect x="1" y="10" width="1" height="1.05" fill="#f48c18"/><rect x="3" y="10" width="1" height="1.05" fill="#b838b4"/><rect x="4" y="10" width="3" height="1.05" fill="#f8a8e0"/><rect x="7" y="10" width="1" height="1.05" fill="#b838b4"/><rect x="9" y="10" width="1" height="1.05" fill="#f48c18"/><rect x="10" y="10" width="1" height="1.05" fill="#a81c10"/><rect x="0" y="11" width="1" height="1.05" fill="#140c10"/><rect x="1" y="11" width="1" height="1.05" fill="#a81c10"/><rect x="2" y="11" width="1" height="1.05" fill="#140c10"/><rect x="3" y="11" width="1" height="1.05" fill="#b838b4"/><rect x="4" y="11" width="3" height="1.05" fill="#cc4cc8"/><rect x="7" y="11" width="1" height="1.05" fill="#b838b4"/><rect x="8" y="11" width="1" height="1.05" fill="#140c10"/><rect x="9" y="11" width="1" height="1.05" fill="#a81c10"/><rect x="10" y="11" width="1" height="1.05" fill="#140c10"/><rect x="0" y="12" width="1" height="1.05" fill="#140c10"/><rect x="1" y="12" width="2" height="1.05" fill="#fff6ee"/><rect x="3" y="12" width="1" height="1.05" fill="#b838b4"/><rect x="4" y="12" width="3" height="1.05" fill="#cc4cc8"/><rect x="7" y="12" width="1" height="1.05" fill="#b838b4"/><rect x="8" y="12" width="2" height="1.05" fill="#fff6ee"/><rect x="10" y="12" width="1" height="1.05" fill="#140c10"/><rect x="1" y="13" width="2" height="1.05" fill="#fff6ee"/><rect x="3" y="13" width="1" height="1.05" fill="#b838b4"/><rect x="4" y="13" width="3" height="1.05" fill="#cc4cc8"/><rect x="7" y="13" width="1" height="1.05" fill="#b838b4"/><rect x="8" y="13" width="2" height="1.05" fill="#fff6ee"/><rect x="1" y="14" width="2" height="1.05" fill="#140c10"/><rect x="3" y="14" width="5" height="1.05" fill="#b838b4"/><rect x="8" y="14" width="2" height="1.05" fill="#140c10"/><rect x="3" y="15" width="2" height="1.05" fill="#b838b4"/><rect x="5" y="15" width="1" height="1.05" fill="#6a1a6a"/><rect x="6" y="15" width="2" height="1.05" fill="#b838b4"/><rect x="3" y="16" width="2" height="1.05" fill="#b838b4"/><rect x="5" y="16" width="1" height="1.05" fill="#6a1a6a"/><rect x="6" y="16" width="2" height="1.05" fill="#b838b4"/><rect x="1" y="17" width="1" height="1.05" fill="#140c10"/><rect x="2" y="17" width="3" height="1.05" fill="#ffe8d0"/><rect x="6" y="17" width="3" height="1.05" fill="#ffe8d0"/><rect x="9" y="17" width="1" height="1.05" fill="#140c10"/><rect x="2" y="18" width="3" height="1.05" fill="#201860"/><rect x="6" y="18" width="3" height="1.05" fill="#201860"/></g><g fill="#ffffff" fill-opacity="0.25"><rect x="265.15" y="59" width="1.3" height="650"/><rect x="316.69" y="59" width="1.3" height="650"/><rect x="368.23" y="59" width="1.3" height="650"/><rect x="419.77" y="59" width="1.3" height="650"/><rect x="471.31" y="59" width="1.3" height="650"/><rect x="522.85" y="59" width="1.3" height="650"/><rect x="574.39" y="59" width="1.3" height="650"/><rect x="625.93" y="59" width="1.3" height="650"/><rect x="677.47" y="59" width="1.3" height="650"/><rect x="729.01" y="59" width="1.3" height="650"/><rect x="780.55" y="59" width="1.3" height="650"/><rect x="832.09" y="59" width="1.3" height="650"/><rect x="883.63" y="59" width="1.3" height="650"/><rect x="935.17" y="59" width="1.3" height="650"/><rect x="986.71" y="59" width="1.3" height="650"/><rect x="1038.25" y="59" width="1.3" height="650"/><rect x="1089.79" y="59" width="1.3" height="650"/><rect x="1141.33" y="59" width="1.3" height="650"/><rect x="1192.87" y="59" width="1.3" height="650"/><rect x="1244.41" y="59" width="1.3" height="650"/><rect x="250" y="84.95" width="1046" height="1.3"/><rect x="250" y="136.45" width="1046" height="1.3"/><rect x="250" y="187.95" width="1046" height="1.3"/><rect x="250" y="239.45" width="1046" height="1.3"/><rect x="250" y="290.95" width="1046" height="1.3"/><rect x="250" y="342.45" width="1046" height="1.3"/><rect x="250" y="393.95" width="1046" height="1.3"/><rect x="250" y="445.45" width="1046" height="1.3"/><rect x="250" y="496.95" width="1046" height="1.3"/><rect x="250" y="548.45" width="1046" height="1.3"/><rect x="250" y="599.95" width="1046" height="1.3"/><rect x="250" y="651.45" width="1046" height="1.3"/><rect x="250" y="702.95" width="1046" height="1.3"/></g><path d="M1260.4 59V650H250" fill="none" stroke="#8a8a8a" stroke-width="3.2"/><path d="M1260.4 59V650H250" fill="none" stroke="#ffffff" stroke-width="1.7"/><path d="M626.6 343V497.4" stroke="#28a4f4" stroke-width="1.3" fill="none"/><path d="M626.6 497.4H1296" stroke="#f03018" stroke-width="1.2" fill="none"/><path d="M1153.8 423L1172.4 710" stroke="#f01212" stroke-width="2.1" fill="none"/><rect x="615.6" y="306.4" width="22.8" height="36" fill="none" stroke="#4458d6" stroke-width="1.5"/><rect x="614.3000000000001" y="305.09999999999997" width="2.6" height="2.6" fill="#7cbf5a" stroke="#4458d6" stroke-width="1.2"/><rect x="637.1" y="305.09999999999997" width="2.6" height="2.6" fill="#7cbf5a" stroke="#4458d6" stroke-width="1.2"/><rect x="614.3000000000001" y="341.09999999999997" width="2.6" height="2.6" fill="#7cbf5a" stroke="#4458d6" stroke-width="1.2"/><rect x="637.1" y="341.09999999999997" width="2.6" height="2.6" fill="#7cbf5a" stroke="#4458d6" stroke-width="1.2"/><circle cx="279" cy="633.2" r="12.7" fill="#0c0c0c"/><circle cx="279" cy="633.2" r="11.2" fill="#8c8c8c"/><text x="279" y="639.4000000000001" font-family="Liberation Sans" font-weight="bold" font-size="17.5" fill="#ffffff" text-anchor="middle">?</text><circle cx="279" cy="665.1" r="12.7" fill="#0c0c0c"/><circle cx="279" cy="665.1" r="11.2" fill="#8c8c8c"/><text x="279" y="671.3000000000001" font-family="Liberation Sans" font-weight="bold" font-size="17.5" fill="#ffffff" text-anchor="middle">?</text></svg><div class="abs" style="left:758px;top:-1px;width:278px;height:36px;background:rgba(28,48,24,.88);border-radius:0 0 4px 4px"></div><div class="abs" style="left:763px;top:11px;width:5px;height:1px;background:#5a6a58;box-shadow:0 3px #5a6a58,0 6px #5a6a58,0 9px #5a6a58"></div><div class="abs" style="left:773px;top:5px;width:24px;height:24px;background:#80869a;border:1px solid #a8acbc;border-radius:3px"></div><div class="abs" style="left:797px;top:5px;width:10px;height:24px;background:#222222;border:1px solid #444a42;border-radius:3px"></div><div class="abs" style="left:811px;top:9px;width:1px;height:16px;background:#3c4c3a"></div><div class="abs" style="left:816px;top:5px;width:24px;height:24px;background:#222222;border:1px solid #444a42;border-radius:3px"></div><div class="abs" style="left:848px;top:5px;width:24px;height:24px;background:#222222;border:1px solid #444a42;border-radius:3px"></div><div class="abs" style="left:880px;top:5px;width:24px;height:24px;background:#222222;border:1px solid #444a42;border-radius:3px"></div><div class="abs" style="left:912px;top:5px;width:24px;height:24px;background:#222222;border:1px solid #444a42;border-radius:3px"></div><div class="abs" style="left:944px;top:5px;width:24px;height:24px;background:#80869a;border:1px solid #a8acbc;border-radius:3px"></div><div class="abs" style="left:976px;top:5px;width:24px;height:24px;background:#222222;border:1px solid #444a42;border-radius:3px"></div><div class="abs" style="left:1008px;top:5px;width:24px;height:24px;background:#222222;border:1px solid #444a42;border-radius:3px"></div><svg class="abs" style="left:773px;top:5px" width="24" height="24" viewBox="0 0 24 24" fill="none" stroke="#f4f4f4" stroke-width="1.5"><rect x="5" y="5" width="14" height="14" rx="2"/><path d="M12 5v14M5 12h14"/></svg><svg class="abs" style="left:799px;top:15px" width="7" height="4"><path d="M0 0h7L3.5 4z" fill="#f0f0f0"/></svg><svg class="abs" style="left:816px;top:5px" width="24" height="24" viewBox="0 0 24 24" fill="none" stroke="#f4f4f4" stroke-width="1.5"><circle cx="10.5" cy="10.5" r="5"/><path d="M14.2 14.2L19 19" stroke-width="2.2"/><path d="M8 10.5h5" stroke-width="1.3"/></svg><svg class="abs" style="left:848px;top:5px" width="24" height="24" viewBox="0 0 24 24" fill="none" stroke="#f4f4f4" stroke-width="1.5"><circle cx="10.5" cy="10.5" r="5"/><path d="M14.2 14.2L19 19" stroke-width="2.2"/><path d="M8 9.3h5M8 11.7h5" stroke-width="1.2"/></svg><svg class="abs" style="left:880px;top:5px" width="24" height="24" viewBox="0 0 24 24" fill="none" stroke="#f4f4f4" stroke-width="1.5"><circle cx="10.5" cy="10.5" r="5"/><path d="M14.2 14.2L19 19" stroke-width="2.2"/><path d="M8 10.5h5M10.5 8v5" stroke-width="1.3"/></svg><svg class="abs" style="left:912px;top:5px" width="24" height="24" viewBox="0 0 24 24" fill="none" stroke="#f4f4f4" stroke-width="1.5"><path d="M5.5 9.5v-4h4M14.5 5.5h4v4M18.5 14.5v4h-4M9.5 18.5h-4v-4" stroke-width="1.7"/></svg><svg class="abs" style="left:944px;top:5px" width="24" height="24" viewBox="0 0 24 24" fill="none" stroke="#f4f4f4" stroke-width="1.5"><rect x="5" y="5" width="14" height="14" rx="1.5"/><rect x="8.3" y="8.3" width="7.4" height="7.4"/></svg><svg class="abs" style="left:976px;top:5px" width="24" height="24" viewBox="0 0 24 24" fill="none" stroke="#f4f4f4" stroke-width="1.5"><path d="M8.5 6L17 12L8.5 18Z" stroke-width="1.6" stroke-linejoin="round"/></svg><svg class="abs" style="left:1008px;top:5px" width="24" height="24" viewBox="0 0 24 24" fill="none" stroke="#f4f4f4" stroke-width="1.5"><path d="M6 8l6-3 6 3-6 3zM6 8" fill="#f4f4f4" stroke="none"/><path d="M6 11.5l6 3 6-3M6 15l6 3 6-3" stroke-width="1.3" stroke="#a8a8a8"/><path d="M15 4l3 1.5-3 1.5z" fill="#1d1d1d" stroke="none"/></svg></div><div class="abs" style="left:220px;top:709px;width:1076px;height:23px;background:#242424"></div><div class="abs" style="left:220px;top:709px;width:1076px;height:1.2px;background:#1a1a1a"></div><div class="abs" style="left:220px;top:710.2px;width:1076px;height:1.4px;background:#2a2a2a"></div><div class="abs" style="left:232px;top:711.5px;width:99px;height:19px;background:#181818;border:1px solid #262626;border-radius:3px"></div><div class="abs" style="left:334px;top:711.5px;width:97px;height:19px;background:#181818;border:1px solid #262626;border-radius:3px"></div><div class="abs" style="left:434px;top:711.5px;width:860px;height:19px;background:#181818;border:1px solid #262626;border-radius:3px"></div><div class="t" style="left:236px;top:712.5px;color:#dcdcdc;font-size:12px;letter-spacing:-0.037px;">(778, 223)</div><div class="t" style="left:336px;top:712.5px;color:#dcdcdc;font-size:12px;letter-spacing:-0.037px;">(768, 192)</div><div class="t" style="left:436px;top:712.5px;color:#dcdcdc;font-size:12px;letter-spacing:-0.128px;">inst_1EFA4F92: (288, 192)</div><div class="abs" style="left:21px;top:732px;width:1282px;height:147px;background:#212121"></div><div class="abs" style="left:21px;top:731.5px;width:1275px;height:10px;background:#2a2a2a"></div><div class="abs" style="left:21px;top:732.4px;width:1275px;height:1.1px;background:#3a3a3a"></div><div class="abs" style="left:21px;top:739px;width:1275px;height:1px;background:#1a1a1a"></div><div class="abs" style="left:21px;top:740px;width:1275px;height:1px;background:#3c3c3c"></div><div class="abs" style="left:21px;top:741px;width:1275px;height:26px;background:#272727"></div><div class="abs" style="left:22px;top:744px;width:149px;height:22px;background:#1d1d1d;border:1.4px solid #0aa561;border-bottom:none;border-radius:4px 4px 0 0"></div><div class="abs" style="left:29px;top:763px;width:134px;height:1.8px;background:#0aa561"></div><div class="t" style="left:31px;top:745.5px;color:#f0f0f0;font-size:12px;letter-spacing:0.648px;">Output</div><svg class="abs" style="left:154px;top:749px" width="10" height="10" viewBox="0 0 10 10"><path d="M0.5 0.5L9.5 9.5M9.5 0.5L0.5 9.5" stroke="#b4bccb" stroke-width="1.5" fill="none"/></svg><div class="abs" style="left:172px;top:744.4px;width:148px;height:19.8px;background:#333;border-radius:3px 3px 0 0"></div><div class="t" style="left:181px;top:745.5px;color:#767676;font-size:12px;letter-spacing:-0.019px;">Search Results</div><svg class="abs" style="left:304px;top:749px" width="10" height="10" viewBox="0 0 10 10"><path d="M0.5 0.5L9.5 9.5M9.5 0.5L0.5 9.5" stroke="#b4bccb" stroke-width="1.5" fill="none"/></svg><div class="abs" style="left:322px;top:744.4px;width:148px;height:19.8px;background:#333;border-radius:3px 3px 0 0"></div><div class="t" style="left:331px;top:745.5px;color:#767676;font-size:12px;letter-spacing:0.2px;">Source Control</div><svg class="abs" style="left:454px;top:749px" width="10" height="10" viewBox="0 0 10 10"><path d="M0.5 0.5L9.5 9.5M9.5 0.5L0.5 9.5" stroke="#b4bccb" stroke-width="1.5" fill="none"/></svg><div class="abs" style="left:472px;top:744.4px;width:148px;height:19.8px;background:#333;border-radius:3px 3px 0 0"></div><div class="t" style="left:481px;top:745.5px;color:#767676;font-size:12px;letter-spacing:0.341px;">Breakpoints</div><svg class="abs" style="left:604px;top:749px" width="10" height="10" viewBox="0 0 10 10"><path d="M0.5 0.5L9.5 9.5M9.5 0.5L0.5 9.5" stroke="#b4bccb" stroke-width="1.5" fill="none"/></svg><div class="abs" style="left:622px;top:744.4px;width:148px;height:19.8px;background:#333;border-radius:3px 3px 0 0"></div><div class="t" style="left:631px;top:745.5px;color:#767676;font-size:12px;letter-spacing:0.24px;">Compile Errors</div><svg class="abs" style="left:754px;top:749px" width="10" height="10" viewBox="0 0 10 10"><path d="M0.5 0.5L9.5 9.5M9.5 0.5L0.5 9.5" stroke="#b4bccb" stroke-width="1.5" fill="none"/></svg><div class="abs" style="left:772px;top:744.4px;width:148px;height:19.8px;background:#333;border-radius:3px 3px 0 0"></div><div class="t" style="left:781px;top:745.5px;color:#767676;font-size:12px;letter-spacing:0.185px;">Diagnostics</div><svg class="abs" style="left:904px;top:749px" width="10" height="10" viewBox="0 0 10 10"><path d="M0.5 0.5L9.5 9.5M9.5 0.5L0.5 9.5" stroke="#b4bccb" stroke-width="1.5" fill="none"/></svg><div class="abs" style="left:922px;top:744.4px;width:148px;height:19.8px;background:#333;border-radius:3px 3px 0 0"></div><div class="t" style="left:931px;top:745.5px;color:#767676;font-size:12px;letter-spacing:0.237px;">Project Tool</div><svg class="abs" style="left:1054px;top:749px" width="10" height="10" viewBox="0 0 10 10"><path d="M0.5 0.5L9.5 9.5M9.5 0.5L0.5 9.5" stroke="#b4bccb" stroke-width="1.5" fill="none"/></svg><div class="abs" style="left:170px;top:763.7px;width:110px;height:1.3px;background:linear-gradient(90deg,#0aa561 0,#0aa561 25%,rgba(10,165,97,0) 100%)"></div><div class="abs" style="left:1071.7px;top:748.2px;width:23px;height:16px;background:#323232;border-radius:4px 6px 0 0"></div><svg class="abs" style="left:1078px;top:752px" width="9" height="9" shape-rendering="crispEdges"><path d="M4.5 1v7M1 4.5h7" stroke="#f0f0f0" stroke-width="1"/></svg><div class="abs" style="left:21px;top:766.4px;width:1275px;height:1.8px;background:#161616"></div><div class="abs" style="left:21px;top:768px;width:1275px;height:27px;background:#414141;border:1px solid #585858;border-bottom-color:#5a5a5a"></div><div class="t" style="left:31px;top:772.5px;color:#f2f2f2;font-size:12px;letter-spacing:0.648px;">Output</div><div class="abs" style="left:21px;top:795px;width:1275px;height:3px;background:#1b1b1b"></div><div class="abs" style="left:22px;top:798px;width:1274px;height:15px;background:#454545"></div><div class="abs" style="left:1296px;top:14px;width:7px;height:865px;background:#2b2b2b"></div><div class="abs" style="left:1296px;top:14px;width:0.8px;height:865px;background:#3e3e3e"></div><div class="abs" style="left:1302.2px;top:14px;width:0.8px;height:865px;background:#1c1c1c"></div><div class="abs" style="left:1303px;top:14px;width:284px;height:865px;background:#212121"></div><div class="abs" style="left:1303px;top:14px;width:284px;height:26px;background:#282828"></div><div class="abs" style="left:1303px;top:39px;width:284px;height:3px;background:#1c1c1c"></div><div class="abs" style="left:1305px;top:18px;width:149px;height:21px;background:#1d1d1d;border:1.4px solid #0aa561;border-bottom:none;border-radius:4px 4px 0 0"></div><div class="abs" style="left:1303px;top:30px;width:3px;height:9px;border-left:1.3px solid #0aa561;border-bottom:1.3px solid #0aa561;border-radius:0 0 0 3px"></div><div class="abs" style="left:1315px;top:36.6px;width:132px;height:2px;background:#0aa561"></div><div class="t" style="left:1315px;top:19.5px;color:#f4f4f4;font-size:12px;letter-spacing:-0.047px;">Assets</div><svg class="abs" style="left:1437px;top:23px" width="10" height="10" viewBox="0 0 10 10"><path d="M0.5 0.5L9.5 9.5M9.5 0.5L0.5 9.5" stroke="#b4bccb" stroke-width="1.5" fill="none"/></svg><div class="abs" style="left:1455px;top:22px;width:23px;height:17px;background:#2e2e2e;border:1px solid #3d3d3d;border-bottom:none;border-radius:5px 5px 0 0"></div><svg class="abs" style="left:1462px;top:25px" width="9" height="9" shape-rendering="crispEdges"><path d="M4.5 1v7M1 4.5h7" stroke="#f0f0f0" stroke-width="1"/></svg><div class="abs" style="left:1454px;top:38px;width:110px;height:1.3px;background:linear-gradient(90deg,#0aa561 0,#0aa561 50%,rgba(10,165,97,0) 100%)"></div><div class="abs" style="left:1303px;top:42px;width:284px;height:27px;background:#474b59;border-top:1px solid #525664;border-bottom:1px solid #30323a"></div><div class="abs" style="left:1309.2px;top:46px;width:1.8px;height:20px;background:#0aa561"></div><div class="t" style="left:1315px;top:46.5px;color:#f4f4f4;font-size:12px;letter-spacing:0.149px;">Asset Browser</div><div class="abs" style="left:1303px;top:69px;width:284px;height:35px;background:#222"></div><div class="abs" style="left:1308px;top:75px;width:184px;height:24px;background:#1b1b1b;border:1px solid #2c2c2c;border-radius:3px"></div><svg class="abs" style="left:1312px;top:79px" width="16" height="16" viewBox="0 0 16 16" fill="none" stroke="#ededed"><circle cx="6.3" cy="6.3" r="5" stroke-width="1.3"/><path d="M10 10L14.6 14.6" stroke-width="2.2"/></svg><div class="t" style="left:1334px;top:79px;color:#767676;font-size:12px;letter-spacing:-0.254px;">Search...</div><div class="abs" style="left:1502px;top:74px;width:1px;height:22px;background:#3c3c3c"></div><div class="abs" style="left:1558px;top:74px;width:1px;height:22px;background:#3c3c3c"></div><svg class="abs" style="left:1511px;top:78px" width="14" height="14" viewBox="0 0 14 14" fill="none" stroke="#f0f0f0" stroke-width="1.2"><circle cx="7" cy="7" r="6"/><path d="M7 3.6v6.8M3.6 7h6.8"/></svg><svg class="abs" style="left:1537px;top:78px" width="12" height="13" viewBox="0 0 12 13" fill="none" stroke="#f0f0f0" stroke-width="1.2" stroke-linejoin="round"><path d="M0.8 1.8Q6 0 11.2 1.8L7.4 6.6V11.6L4.6 10V6.6Z"/></svg><div class="abs" style="left:1567px;top:79.5px;width:14px;height:2px;background:#f4f4f4;box-shadow:0 4.5px #f4f4f4,0 9px #f4f4f4"></div><div class="abs" style="left:1303px;top:104px;width:271px;height:94px;background:#353535"></div><div class="abs" style="left:0;top:1px"><div class="abs" style="left:1312px;top:104px;width:2px;height:82px;background:#444"></div><div class="abs" style="left:1313px;top:118px;width:9px;height:2px;background:#444"></div><div class="abs" style="left:1313px;top:140px;width:9px;height:2px;background:#444"></div><div class="abs" style="left:1313px;top:162px;width:9px;height:2px;background:#444"></div><div class="abs" style="left:1313px;top:184px;width:9px;height:2px;background:#444"></div><div class="abs" style="left:1345px;top:104px;width:6px;height:1px;background:#4a4a4a"></div><svg class="abs" style="left:1328.6px;top:113.5px" width="7" height="11" viewBox="0 0 7 11"><path d="M0.7 0.9V10.1L5.4 5.5Z" fill="none" stroke="#dcdcdc" stroke-width="1.05" stroke-linejoin="round"/></svg><svg class="abs" style="left:1345.6px;top:111.4px" width="14.6" height="14.6" viewBox="0 0 16 16" fill="none" stroke="#f4f4f4"><circle cx="6.3" cy="6.3" r="5" stroke-width="1.3"/><path d="M10 10L14.6 14.6" stroke-width="2.2"/></svg><div class="t" style="left:1367px;top:111px;color:#ececec;font-size:12px;letter-spacing:-0.095px;">Saved Searches</div><svg class="abs" style="left:1328.6px;top:135.5px" width="7" height="11" viewBox="0 0 7 11"><path d="M0.7 0.9V10.1L5.4 5.5Z" fill="none" stroke="#dcdcdc" stroke-width="1.05" stroke-linejoin="round"/></svg><svg class="abs" style="left:1345px;top:133px" width="15" height="15" viewBox="0 0 15 15"><path d="M0.8 8.6L7.6 1.8L13 0.8Q14.4 0.8 14.2 2.2L13.2 7.4L6.4 14.2Z" fill="#f4f4f4"/><circle cx="11.2" cy="3.8" r="1.1" fill="#353535"/></svg><div class="t" style="left:1367px;top:133px;color:#ececec;font-size:12px;letter-spacing:-0.172px;">Tags</div><svg class="abs" style="left:1329.1px;top:156.7px" width="7" height="11" viewBox="0 0 7 11"><path d="M0.3 0.3V10.7L6.3 5.5Z" fill="#f4f4f4"/></svg><svg class="abs" style="left:1346.6px;top:155.7px" width="13" height="13" viewBox="0 0 13 13" fill="none" stroke="#f4f4f4" stroke-linejoin="round"><path d="M10.88 4.79L12.52 5.50L12.52 7.50L10.88 8.21L10.81 8.38L11.46 10.05L10.05 11.46L8.38 10.81L8.21 10.88L7.50 12.52L5.50 12.52L4.79 10.88L4.62 10.81L2.95 11.46L1.54 10.05L2.19 8.38L2.12 8.21L0.48 7.50L0.48 5.50L2.12 4.79L2.19 4.62L1.54 2.95L2.95 1.54L4.62 2.19L4.79 2.12L5.50 0.48L7.50 0.48L8.21 2.12L8.38 2.19L10.05 1.54L11.46 2.95L10.81 4.62Z" stroke-width="1.05"/><circle cx="6.5" cy="6.5" r="2" stroke-width="1.05"/></svg><div class="t" style="left:1367px;top:155px;color:#ececec;font-size:12px;letter-spacing:0.281px;">Game Options</div><svg class="abs" style="left:1328.6px;top:179.5px" width="7" height="11" viewBox="0 0 7 11"><path d="M0.7 0.9V10.1L5.4 5.5Z" fill="none" stroke="#dcdcdc" stroke-width="1.05" stroke-linejoin="round"/></svg><svg class="abs" style="left:1347.4px;top:175.4px" width="13" height="17" viewBox="0 0 13 17" fill="none" stroke="#f4f4f4"><path d="M0.9 5V15.4H11.6V5" stroke-width="1.1" stroke-dasharray="1.1 1.05"/><path d="M0.9 5.4H4M9.4 5.4H11.6" stroke-width="1.1"/><path d="M7.2 0.6V6.4L1.8 3.5Z" fill="#f4f4f4" stroke="none"/><path d="M7.2 3.5H10.8" stroke-width="1.2"/></svg><div class="t" style="left:1367px;top:177px;color:#ececec;font-size:12px;letter-spacing:0.156px;">Prefabs</div></div><div class="abs" style="left:1574px;top:104px;width:13px;height:775px;background:#2a2a2a"></div><div class="abs" style="left:1576px;top:181px;width:10px;height:657px;background:#4e4e4e"></div><svg class="abs" style="left:1575px;top:106px" width="12" height="10"><path d="M1.5 8.5h10L6.5 2.5z" fill="#4a4a4a"/></svg><div class="abs" style="left:1303px;top:291px;width:271px;height:22px;background:#514f90"></div><div class="abs" style="left:1303px;top:313px;width:271px;height:264px;background:#34334b"></div><div class="abs" style="left:1303px;top:621px;width:271px;height:22px;background:#114e8c"></div><div class="abs" style="left:1303px;top:643px;width:271px;height:1px;background:#1c1c1c"></div><div class="abs" style="left:1303px;top:644px;width:271px;height:21px;background:#8b2f32"></div><div class="abs" style="left:1303px;top:665px;width:271px;height:214px;background:#4a2526"></div><div class="abs" style="left:0;top:1px"><div class="abs" style="left:1312px;top:313px;width:2px;height:253px;background:#4a4a44"></div><div class="abs" style="left:1313px;top:322px;width:10px;height:2px;background:#4a4a44"></div><div class="abs" style="left:1313px;top:344px;width:10px;height:2px;background:#4a4a44"></div><div class="abs" style="left:1313px;top:366px;width:10px;height:2px;background:#4a4a44"></div><div class="abs" style="left:1313px;top:388px;width:10px;height:2px;background:#4a4a44"></div><div class="abs" style="left:1313px;top:410px;width:10px;height:2px;background:#4a4a44"></div><div class="abs" style="left:1313px;top:432px;width:10px;height:2px;background:#4a4a44"></div><div class="abs" style="left:1313px;top:454px;width:10px;height:2px;background:#4a4a44"></div><div class="abs" style="left:1313px;top:476px;width:10px;height:2px;background:#4a4a44"></div><div class="abs" style="left:1313px;top:498px;width:10px;height:2px;background:#4a4a44"></div><div class="abs" style="left:1313px;top:520px;width:10px;height:2px;background:#4a4a44"></div><div class="abs" style="left:1313px;top:542px;width:10px;height:2px;background:#4a4a44"></div><div class="abs" style="left:1313px;top:564px;width:10px;height:2px;background:#4a4a44"></div><div class="abs" style="left:1312px;top:665px;width:2px;height:208px;background:#414a4a"></div><div class="abs" style="left:1313px;top:674px;width:10px;height:2px;background:#414a4a"></div><div class="abs" style="left:1313px;top:696px;width:10px;height:2px;background:#414a4a"></div><div class="abs" style="left:1313px;top:850px;width:10px;height:2px;background:#414a4a"></div><div class="abs" style="left:1313px;top:872px;width:10px;height:2px;background:#414a4a"></div><div class="abs" style="left:1332px;top:709px;width:2px;height:121px;background:#414a4a"></div><div class="abs" style="left:1333px;top:718px;width:10px;height:2px;background:#414a4a"></div><div class="abs" style="left:1333px;top:740px;width:10px;height:2px;background:#414a4a"></div><div class="abs" style="left:1333px;top:762px;width:10px;height:2px;background:#414a4a"></div><div class="abs" style="left:1333px;top:784px;width:10px;height:2px;background:#414a4a"></div><div class="abs" style="left:1333px;top:806px;width:10px;height:2px;background:#414a4a"></div><div class="abs" style="left:1333px;top:828px;width:10px;height:2px;background:#414a4a"></div><svg class="abs" style="left:1308.6px;top:207.5px" width="7" height="11" viewBox="0 0 7 11"><path d="M0.7 0.9V10.1L5.4 5.5Z" fill="none" stroke="#dcdcdc" stroke-width="1.05" stroke-linejoin="round"/></svg><svg class="abs" style="left:1325px;top:207.4px" width="16" height="10.4" viewBox="0 0 16 10.4" fill="none" stroke="#4c4c4c" stroke-width="1.1"><path d="M0.55 4H15.45V9.85H0.55Z"/><path d="M0.4 0.6H5.2M0.4 2.1H6.2"/></svg><div class="t" style="left:1347px;top:205px;color:#ececec;font-size:12px;letter-spacing:0.276px;">Animation Curves</div><svg class="abs" style="left:1308.6px;top:229.5px" width="7" height="11" viewBox="0 0 7 11"><path d="M0.7 0.9V10.1L5.4 5.5Z" fill="none" stroke="#dcdcdc" stroke-width="1.05" stroke-linejoin="round"/></svg><svg class="abs" style="left:1325px;top:229.4px" width="16" height="10.4" viewBox="0 0 16 10.4" fill="none" stroke="#4c4c4c" stroke-width="1.1"><path d="M0.55 4H15.45V9.85H0.55Z"/><path d="M0.4 0.6H5.2M0.4 2.1H6.2"/></svg><div class="t" style="left:1347px;top:227px;color:#ececec;font-size:12px;letter-spacing:0.167px;">Extensions</div><svg class="abs" style="left:1308.6px;top:251.50000000000003px" width="7" height="11" viewBox="0 0 7 11"><path d="M0.7 0.9V10.1L5.4 5.5Z" fill="none" stroke="#dcdcdc" stroke-width="1.05" stroke-linejoin="round"/></svg><svg class="abs" style="left:1325px;top:251.4px" width="16" height="10.4" viewBox="0 0 16 10.4" fill="none" stroke="#4c4c4c" stroke-width="1.1"><path d="M0.55 4H15.45V9.85H0.55Z"/><path d="M0.4 0.6H5.2M0.4 2.1H6.2"/></svg><div class="t" style="left:1347px;top:249px;color:#ececec;font-size:12px;letter-spacing:0.15px;">Fonts</div><svg class="abs" style="left:1308.6px;top:273.5px" width="7" height="11" viewBox="0 0 7 11"><path d="M0.7 0.9V10.1L5.4 5.5Z" fill="none" stroke="#dcdcdc" stroke-width="1.05" stroke-linejoin="round"/></svg><svg class="abs" style="left:1325px;top:273.4px" width="16" height="10.4" viewBox="0 0 16 10.4" fill="none" stroke="#4c4c4c" stroke-width="1.1"><path d="M0.55 4H15.45V9.85H0.55Z"/><path d="M0.4 0.6H5.2M0.4 2.1H6.2"/></svg><div class="t" style="left:1347px;top:271px;color:#ececec;font-size:12px;letter-spacing:0.328px;">Notes</div><svg class="abs" style="left:1306.6px;top:296.90000000000003px" width="11" height="7" viewBox="0 0 11 7"><path d="M0.3 0.3H10.7L5.5 6.4Z" fill="#f4f4f4"/></svg><svg class="abs" style="left:1325px;top:296px" width="16" height="10.4" viewBox="0 0 16 10.4"><path d="M0 0H5.6L6.8 2H16V10.4H0Z" fill="#8d8cff"/><path d="M1.3 3.2H4.8L6.2 5.2H14.8" fill="none" stroke="#000" stroke-opacity=".55" stroke-width="1.7"/></svg><div class="t" style="left:1347px;top:293px;color:#ececec;font-size:12px;letter-spacing:0.21px;">Objects</div><svg class="abs" style="left:1329.1px;top:316.70000000000005px" width="7" height="11" viewBox="0 0 7 11"><path d="M0.3 0.3V10.7L6.3 5.5Z" fill="#f4f4f4"/></svg><svg class="abs" style="left:1345px;top:318px" width="16" height="10.4" viewBox="0 0 16 10.4"><path d="M0 0H5.2L6.2 1.6H0ZM0 2.5H16V10.4H0Z" fill="#8d8cff"/></svg><div class="t" style="left:1367px;top:315px;color:#ececec;font-size:12px;letter-spacing:-0.028px;">Clock</div><svg class="abs" style="left:1329.1px;top:338.70000000000005px" width="7" height="11" viewBox="0 0 7 11"><path d="M0.3 0.3V10.7L6.3 5.5Z" fill="#f4f4f4"/></svg><svg class="abs" style="left:1345px;top:340px" width="16" height="10.4" viewBox="0 0 16 10.4"><path d="M0 0H5.2L6.2 1.6H0ZM0 2.5H16V10.4H0Z" fill="#8d8cff"/></svg><div class="t" style="left:1367px;top:337px;color:#ececec;font-size:12px;letter-spacing:0.266px;">Exteriors</div><svg class="abs" style="left:1329.1px;top:360.70000000000005px" width="7" height="11" viewBox="0 0 7 11"><path d="M0.3 0.3V10.7L6.3 5.5Z" fill="#f4f4f4"/></svg><svg class="abs" style="left:1345px;top:362px" width="16" height="10.4" viewBox="0 0 16 10.4"><path d="M0 0H5.2L6.2 1.6H0ZM0 2.5H16V10.4H0Z" fill="#8d8cff"/></svg><div class="t" style="left:1367px;top:359px;color:#ececec;font-size:12px;letter-spacing:0.359px;">Interactions</div><svg class="abs" style="left:1329.1px;top:382.70000000000005px" width="7" height="11" viewBox="0 0 7 11"><path d="M0.3 0.3V10.7L6.3 5.5Z" fill="#f4f4f4"/></svg><svg class="abs" style="left:1345px;top:384px" width="16" height="10.4" viewBox="0 0 16 10.4"><path d="M0 0H5.2L6.2 1.6H0ZM0 2.5H16V10.4H0Z" fill="#8d8cff"/></svg><div class="t" style="left:1367px;top:381px;color:#ececec;font-size:12px;letter-spacing:0.203px;">npcs</div><div class="abs" style="left:1329px;top:406.6px;width:7px;height:7px;border-radius:4px;background:#f4f4f4"></div><div class="abs" style="left:1345px;top:403px;width:16px;height:16px;border:1px solid #1f5543"></div><div class="t" style="left:1367px;top:403px;color:#ececec;font-size:12px;letter-spacing:0.254px;">coll</div><div class="abs" style="left:1329px;top:428.6px;width:7px;height:7px;border-radius:4px;background:#f4f4f4"></div><svg class="abs" style="left:1344px;top:425px" width="16" height="16" viewBox="0 0 16 16" fill="none" stroke="#f4f4f4" stroke-width="1.15"><rect x="0.7" y="0.7" width="14.6" height="14.6" rx="2.6"/><path d="M10.4 15.2V13A2.4 2.4 0 0 1 12.8 10.6H15.2"/></svg><div class="t" style="left:1367px;top:425px;color:#ececec;font-size:12px;letter-spacing:0.269px;">CollisionManager</div><div class="abs" style="left:1329px;top:450.6px;width:7px;height:7px;border-radius:4px;background:#f4f4f4"></div><svg class="abs" style="left:1344px;top:447px" width="16" height="16" viewBox="0 0 16 16" fill="none" stroke="#f4f4f4" stroke-width="1.15"><rect x="0.7" y="0.7" width="14.6" height="14.6" rx="2.6"/><path d="M10.4 15.2V13A2.4 2.4 0 0 1 12.8 10.6H15.2"/></svg><div class="t" style="left:1367px;top:447px;color:#ececec;font-size:12px;letter-spacing:0.287px;">Debugger</div><div class="abs" style="left:1329px;top:472.6px;width:7px;height:7px;border-radius:4px;background:#f4f4f4"></div><svg class="abs" style="left:1344px;top:469px" width="16" height="16" viewBox="0 0 16 16" fill="none" stroke="#f4f4f4" stroke-width="1.15"><rect x="0.7" y="0.7" width="14.6" height="14.6" rx="2.6"/><path d="M10.4 15.2V13A2.4 2.4 0 0 1 12.8 10.6H15.2"/></svg><div class="t" style="left:1367px;top:469px;color:#ececec;font-size:12px;letter-spacing:0.202px;">GameInstance</div><div class="abs" style="left:1329px;top:494.6px;width:7px;height:7px;border-radius:4px;background:#f4f4f4"></div><svg class="abs" style="left:1344px;top:491px" width="16" height="16" viewBox="0 0 16 16" fill="none" stroke="#f4f4f4" stroke-width="1.15"><rect x="0.7" y="0.7" width="14.6" height="14.6" rx="2.6"/><path d="M10.4 15.2V13A2.4 2.4 0 0 1 12.8 10.6H15.2"/></svg><div class="t" style="left:1367px;top:491px;color:#ececec;font-size:12px;letter-spacing:0.334px;">obj_depthSort</div><div class="abs" style="left:1329px;top:516.6px;width:7px;height:7px;border-radius:4px;background:#f4f4f4"></div><svg class="abs" style="left:1344px;top:513px" width="16" height="16" viewBox="0 0 16 16" fill="none" stroke="#f4f4f4" stroke-width="1.15"><rect x="0.7" y="0.7" width="14.6" height="14.6" rx="2.6"/><path d="M10.4 15.2V13A2.4 2.4 0 0 1 12.8 10.6H15.2"/></svg><div class="t" style="left:1367px;top:513px;color:#ececec;font-size:12px;letter-spacing:0.282px;">obj_dialogueManager</div><div class="abs" style="left:1329px;top:538.6px;width:7px;height:7px;border-radius:4px;background:#f4f4f4"></div><svg class="abs" style="left:1344px;top:535px" width="16" height="16" viewBox="0 0 16 16" fill="none" stroke="#f4f4f4" stroke-width="1.15"><rect x="0.7" y="0.7" width="14.6" height="14.6" rx="2.6"/><path d="M10.4 15.2V13A2.4 2.4 0 0 1 12.8 10.6H15.2"/></svg><div class="t" style="left:1367px;top:535px;color:#ececec;font-size:12px;letter-spacing:0.234px;">obj_solid_parent</div><div class="abs" style="left:1329px;top:560.6px;width:7px;height:7px;border-radius:4px;background:#f4f4f4"></div><svg class="abs" style="left:1348.8px;top:558.6px" width="8.2" height="12.6" viewBox="0 0 13 20"><rect x="3" y="0" width="4" height="1.08" fill="#101018"/><rect x="2" y="1" width="8" height="1.08" fill="#101018"/><rect x="1" y="2" width="6" height="1.08" fill="#101018"/><rect x="7" y="2" width="3" height="1.08" fill="#3c3c4c"/><rect x="10" y="2" width="1" height="1.08" fill="#101018"/><rect x="1" y="3" width="5" height="1.08" fill="#101018"/><rect x="6" y="3" width="5" height="1.08" fill="#3c3c4c"/><rect x="11" y="3" width="1" height="1.08" fill="#101018"/><rect x="0" y="4" width="5" height="1.08" fill="#101018"/><rect x="5" y="4" width="4" height="1.08" fill="#3c3c4c"/><rect x="9" y="4" width="4" height="1.08" fill="#101018"/><rect x="0" y="5" width="13" height="1.08" fill="#101018"/><rect x="1" y="6" width="4" height="1.08" fill="#101018"/><rect x="5" y="6" width="1" height="1.08" fill="#f4d0b0"/><rect x="6" y="6" width="1" height="1.08" fill="#101018"/><rect x="7" y="6" width="2" height="1.08" fill="#f4d0b0"/><rect x="9" y="6" width="4" height="1.08" fill="#101018"/><rect x="1" y="7" width="3" height="1.08" fill="#101018"/><rect x="4" y="7" width="1" height="1.08" fill="#ffffff"/><rect x="5" y="7" width="1" height="1.08" fill="#3878c8"/><rect x="6" y="7" width="2" height="1.08" fill="#f4d0b0"/><rect x="8" y="7" width="1" height="1.08" fill="#3878c8"/><rect x="9" y="7" width="1" height="1.08" fill="#ffffff"/><rect x="10" y="7" width="2" height="1.08" fill="#101018"/><rect x="2" y="8" width="2" height="1.08" fill="#101018"/><rect x="4" y="8" width="6" height="1.08" fill="#f4d0b0"/><rect x="10" y="8" width="1" height="1.08" fill="#101018"/><rect x="3" y="9" width="1" height="1.08" fill="#101018"/><rect x="4" y="9" width="5" height="1.08" fill="#f4d0b0"/><rect x="9" y="9" width="1" height="1.08" fill="#101018"/><rect x="3" y="10" width="7" height="1.08" fill="#20a8e0"/><rect x="2" y="11" width="1" height="1.08" fill="#101018"/><rect x="3" y="11" width="2" height="1.08" fill="#20a8e0"/><rect x="5" y="11" width="3" height="1.08" fill="#1c3c90"/><rect x="8" y="11" width="2" height="1.08" fill="#20a8e0"/><rect x="10" y="11" width="1" height="1.08" fill="#101018"/><rect x="1" y="12" width="1" height="1.08" fill="#101018"/><rect x="2" y="12" width="1" height="1.08" fill="#f4d0b0"/><rect x="3" y="12" width="1" height="1.08" fill="#20a8e0"/><rect x="4" y="12" width="5" height="1.08" fill="#1c3c90"/><rect x="9" y="12" width="1" height="1.08" fill="#20a8e0"/><rect x="10" y="12" width="1" height="1.08" fill="#f4d0b0"/><rect x="11" y="12" width="1" height="1.08" fill="#101018"/><rect x="1" y="13" width="1" height="1.08" fill="#101018"/><rect x="2" y="13" width="1" height="1.08" fill="#f4d0b0"/><rect x="3" y="13" width="7" height="1.08" fill="#1c3c90"/><rect x="10" y="13" width="1" height="1.08" fill="#f4d0b0"/><rect x="11" y="13" width="1" height="1.08" fill="#101018"/><rect x="2" y="14" width="2" height="1.08" fill="#101018"/><rect x="4" y="14" width="5" height="1.08" fill="#1c3c90"/><rect x="9" y="14" width="2" height="1.08" fill="#101018"/><rect x="3" y="15" width="1" height="1.08" fill="#101018"/><rect x="4" y="15" width="2" height="1.08" fill="#1c3c90"/><rect x="6" y="15" width="1" height="1.08" fill="#101018"/><rect x="7" y="15" width="2" height="1.08" fill="#1c3c90"/><rect x="9" y="15" width="1" height="1.08" fill="#101018"/><rect x="3" y="16" width="1" height="1.08" fill="#101018"/><rect x="4" y="16" width="2" height="1.08" fill="#1c3c90"/><rect x="6" y="16" width="1" height="1.08" fill="#101018"/><rect x="7" y="16" width="2" height="1.08" fill="#1c3c90"/><rect x="9" y="16" width="1" height="1.08" fill="#101018"/><rect x="3" y="17" width="1" height="1.08" fill="#101018"/><rect x="4" y="17" width="2" height="1.08" fill="#1c3c90"/><rect x="6" y="17" width="1" height="1.08" fill="#101018"/><rect x="7" y="17" width="2" height="1.08" fill="#1c3c90"/><rect x="9" y="17" width="1" height="1.08" fill="#101018"/><rect x="3" y="18" width="3" height="1.08" fill="#f4d0b0"/><rect x="7" y="18" width="3" height="1.08" fill="#f4d0b0"/><rect x="3" y="19" width="3" height="1.08" fill="#101018"/><rect x="7" y="19" width="4" height="1.08" fill="#101018"/></svg><div class="t" style="left:1367px;top:557px;color:#ececec;font-size:12px;letter-spacing:0.199px;">playChar</div><svg class="abs" style="left:1308.6px;top:581.5px" width="7" height="11" viewBox="0 0 7 11"><path d="M0.7 0.9V10.1L5.4 5.5Z" fill="none" stroke="#dcdcdc" stroke-width="1.05" stroke-linejoin="round"/></svg><svg class="abs" style="left:1325px;top:581.4px" width="16" height="10.4" viewBox="0 0 16 10.4" fill="none" stroke="#4c4c4c" stroke-width="1.1"><path d="M0.55 4H15.45V9.85H0.55Z"/><path d="M0.4 0.6H5.2M0.4 2.1H6.2"/></svg><div class="t" style="left:1347px;top:579px;color:#ececec;font-size:12px;letter-spacing:0.096px;">Particle Systems</div><svg class="abs" style="left:1310.1px;top:602.7px" width="7" height="11" viewBox="0 0 7 11"><path d="M0.3 0.3V10.7L6.3 5.5Z" fill="#f4f4f4"/></svg><svg class="abs" style="left:1325px;top:604px" width="16" height="10.4" viewBox="0 0 16 10.4"><path d="M0 0H5.2L6.2 1.6H0ZM0 2.5H16V10.4H0Z" fill="#555555"/></svg><div class="t" style="left:1347px;top:601px;color:#ececec;font-size:12px;letter-spacing:0.106px;">Paths</div><svg class="abs" style="left:1310.1px;top:624.7px" width="7" height="11" viewBox="0 0 7 11"><path d="M0.3 0.3V10.7L6.3 5.5Z" fill="#f4f4f4"/></svg><svg class="abs" style="left:1325px;top:626px" width="16" height="10.4" viewBox="0 0 16 10.4"><path d="M0 0H5.2L6.2 1.6H0ZM0 2.5H16V10.4H0Z" fill="#1689ff"/></svg><div class="t" style="left:1347px;top:623px;color:#ececec;font-size:12px;letter-spacing:0.156px;">Rooms</div><svg class="abs" style="left:1306.6px;top:648.9px" width="11" height="7" viewBox="0 0 11 7"><path d="M0.3 0.3H10.7L5.5 6.4Z" fill="#f4f4f4"/></svg><svg class="abs" style="left:1325px;top:648px" width="16" height="10.4" viewBox="0 0 16 10.4"><path d="M0 0H5.6L6.8 2H16V10.4H0Z" fill="#ff4a4a"/><path d="M1.3 3.2H4.8L6.2 5.2H14.8" fill="none" stroke="#000" stroke-opacity=".55" stroke-width="1.7"/></svg><div class="t" style="left:1347px;top:645px;color:#ececec;font-size:12px;letter-spacing:0.127px;">Scripts</div><svg class="abs" style="left:1329.1px;top:668.7px" width="7" height="11" viewBox="0 0 7 11"><path d="M0.3 0.3V10.7L6.3 5.5Z" fill="#f4f4f4"/></svg><svg class="abs" style="left:1345px;top:670px" width="16" height="10.4" viewBox="0 0 16 10.4"><path d="M0 0H5.2L6.2 1.6H0ZM0 2.5H16V10.4H0Z" fill="#ff4a4a"/></svg><div class="t" style="left:1367px;top:667px;color:#ececec;font-size:12px;letter-spacing:0.294px;">engine</div><svg class="abs" style="left:1326.6px;top:692.9px" width="11" height="7" viewBox="0 0 11 7"><path d="M0.3 0.3H10.7L5.5 6.4Z" fill="#f4f4f4"/></svg><svg class="abs" style="left:1345px;top:692px" width="16" height="10.4" viewBox="0 0 16 10.4"><path d="M0 0H5.6L6.8 2H16V10.4H0Z" fill="#ff4a4a"/><path d="M1.3 3.2H4.8L6.2 5.2H14.8" fill="none" stroke="#000" stroke-opacity=".55" stroke-width="1.7"/></svg><div class="t" style="left:1367px;top:689px;color:#ececec;font-size:12px;letter-spacing:0.29px;">objects</div><svg class="abs" style="left:1365px;top:710px" width="16" height="18" viewBox="0 0 16 18" fill="none" stroke="#f6f6f6" stroke-width="1.2" stroke-linejoin="round" stroke-linecap="round"><g transform="matrix(1 -0.42 0.07 1 1.5 4.9)"><path d="M1.5 0.6H10.6V3H1.5A1.2 1.2 0 0 1 1.5 0.6Z"/><path d="M2.4 3V9.6M10.6 3V9.2"/><circle cx="2.3" cy="10.8" r="1.3"/><path d="M2.4 12.1H8.4Q10.6 12.1 10.6 9.2"/><path d="M4.8 5.2H8.6V8.6H4.8ZM4.8 6.9H8.6" stroke-width="1"/></g></svg><div class="t" style="left:1387px;top:711px;color:#ececec;font-size:12px;letter-spacing:0.302px;">AIController</div><svg class="abs" style="left:1365px;top:732px" width="16" height="18" viewBox="0 0 16 18" fill="none" stroke="#f6f6f6" stroke-width="1.2" stroke-linejoin="round" stroke-linecap="round"><g transform="matrix(1 -0.42 0.07 1 1.5 4.9)"><path d="M1.5 0.6H10.6V3H1.5A1.2 1.2 0 0 1 1.5 0.6Z"/><path d="M2.4 3V9.6M10.6 3V9.2"/><circle cx="2.3" cy="10.8" r="1.3"/><path d="M2.4 12.1H8.4Q10.6 12.1 10.6 9.2"/><path d="M4.8 5.2H8.6V8.6H4.8ZM4.8 6.9H8.6" stroke-width="1"/></g></svg><div class="t" style="left:1387px;top:733px;color:#ececec;font-size:12px;letter-spacing:0.207px;">Character</div><svg class="abs" style="left:1365px;top:754px" width="16" height="18" viewBox="0 0 16 18" fill="none" stroke="#f6f6f6" stroke-width="1.2" stroke-linejoin="round" stroke-linecap="round"><g transform="matrix(1 -0.42 0.07 1 1.5 4.9)"><path d="M1.5 0.6H10.6V3H1.5A1.2 1.2 0 0 1 1.5 0.6Z"/><path d="M2.4 3V9.6M10.6 3V9.2"/><circle cx="2.3" cy="10.8" r="1.3"/><path d="M2.4 12.1H8.4Q10.6 12.1 10.6 9.2"/><path d="M4.8 5.2H8.6V8.6H4.8ZM4.8 6.9H8.6" stroke-width="1"/></g></svg><div class="t" style="left:1387px;top:755px;color:#ececec;font-size:12px;letter-spacing:0.295px;">DialogueManager</div><svg class="abs" style="left:1365px;top:776px" width="16" height="18" viewBox="0 0 16 18" fill="none" stroke="#f6f6f6" stroke-width="1.2" stroke-linejoin="round" stroke-linecap="round"><g transform="matrix(1 -0.42 0.07 1 1.5 4.9)"><path d="M1.5 0.6H10.6V3H1.5A1.2 1.2 0 0 1 1.5 0.6Z"/><path d="M2.4 3V9.6M10.6 3V9.2"/><circle cx="2.3" cy="10.8" r="1.3"/><path d="M2.4 12.1H8.4Q10.6 12.1 10.6 9.2"/><path d="M4.8 5.2H8.6V8.6H4.8ZM4.8 6.9H8.6" stroke-width="1"/></g></svg><div class="t" style="left:1387px;top:777px;color:#ececec;font-size:12px;letter-spacing:0.34px;">Interactable</div><svg class="abs" style="left:1365px;top:798px" width="16" height="18" viewBox="0 0 16 18" fill="none" stroke="#f6f6f6" stroke-width="1.2" stroke-linejoin="round" stroke-linecap="round"><g transform="matrix(1 -0.42 0.07 1 1.5 4.9)"><path d="M1.5 0.6H10.6V3H1.5A1.2 1.2 0 0 1 1.5 0.6Z"/><path d="M2.4 3V9.6M10.6 3V9.2"/><circle cx="2.3" cy="10.8" r="1.3"/><path d="M2.4 12.1H8.4Q10.6 12.1 10.6 9.2"/><path d="M4.8 5.2H8.6V8.6H4.8ZM4.8 6.9H8.6" stroke-width="1"/></g></svg><div class="t" style="left:1387px;top:799px;color:#ececec;font-size:12px;letter-spacing:0.388px;">InteractionManager</div><svg class="abs" style="left:1365px;top:820px" width="16" height="18" viewBox="0 0 16 18" fill="none" stroke="#f6f6f6" stroke-width="1.2" stroke-linejoin="round" stroke-linecap="round"><g transform="matrix(1 -0.42 0.07 1 1.5 4.9)"><path d="M1.5 0.6H10.6V3H1.5A1.2 1.2 0 0 1 1.5 0.6Z"/><path d="M2.4 3V9.6M10.6 3V9.2"/><circle cx="2.3" cy="10.8" r="1.3"/><path d="M2.4 12.1H8.4Q10.6 12.1 10.6 9.2"/><path d="M4.8 5.2H8.6V8.6H4.8ZM4.8 6.9H8.6" stroke-width="1"/></g></svg><div class="t" style="left:1387px;top:821px;color:#ececec;font-size:12px;letter-spacing:0.196px;">Scheduler</div><svg class="abs" style="left:1329.1px;top:844.7px" width="7" height="11" viewBox="0 0 7 11"><path d="M0.3 0.3V10.7L6.3 5.5Z" fill="#f4f4f4"/></svg><svg class="abs" style="left:1345px;top:846px" width="16" height="10.4" viewBox="0 0 16 10.4"><path d="M0 0H5.2L6.2 1.6H0ZM0 2.5H16V10.4H0Z" fill="#ff4a4a"/></svg><div class="t" style="left:1367px;top:843px;color:#ececec;font-size:12px;letter-spacing:0.19px;">systems</div><svg class="abs" style="left:1345px;top:864px" width="16" height="18" viewBox="0 0 16 18" fill="none" stroke="#f6f6f6" stroke-width="1.2" stroke-linejoin="round" stroke-linecap="round"><g transform="matrix(1 -0.42 0.07 1 1.5 4.9)"><path d="M1.5 0.6H10.6V3H1.5A1.2 1.2 0 0 1 1.5 0.6Z"/><path d="M2.4 3V9.6M10.6 3V9.2"/><circle cx="2.3" cy="10.8" r="1.3"/><path d="M2.4 12.1H8.4Q10.6 12.1 10.6 9.2"/><path d="M4.8 5.2H8.6V8.6H4.8ZM4.8 6.9H8.6" stroke-width="1"/></g></svg><div class="t" style="left:1367px;top:865px;color:#ececec;font-size:12px;letter-spacing:0.177px;">scr_interacatables</div></div><div class="abs" style="left:0;top:0;width:1587px;height:13px;background:#2b2b2b"></div><div class="abs" style="left:0;top:13px;width:1587px;height:1px;background:#1b1b1b"></div><div class="abs" style="left:-6px;top:-14px;width:14px;height:25px;border:1px solid #4a4a4a;border-radius:3px"></div><div class="abs" style="left:33px;top:-14px;width:22px;height:25px;border:1px solid #4a4a4a;border-radius:3px"></div><div class="abs" style="left:59px;top:-14px;width:22px;height:25px;border:1px solid #4a4a4a;border-radius:3px"></div><div class="abs" style="left:105px;top:-14px;width:23px;height:25px;border:1px solid #4a4a4a;border-radius:3px"></div><div class="abs" style="left:131px;top:-14px;width:23px;height:25px;border:1px solid #4a4a4a;border-radius:3px"></div><div class="abs" style="left:157px;top:-14px;width:23px;height:25px;border:1px solid #4a4a4a;border-radius:3px"></div><div class="abs" style="left:183px;top:-14px;width:23px;height:25px;border:1px solid #4a4a4a;border-radius:3px"></div><div class="abs" style="left:1566px;top:-14px;width:26px;height:25px;border:1px solid #4a4a4a;border-radius:3px"></div><div class="abs" style="left:19px;top:0;width:1px;height:10px;background:#3f3f3f"></div><div class="abs" style="left:92px;top:0;width:1px;height:10px;background:#3f3f3f"></div><div class="abs" style="left:217px;top:0;width:1px;height:10px;background:#3f3f3f"></div><svg class="abs" style="left:0;top:0" width="220" height="12" viewBox="0 0 220 12" fill="none" stroke="#d8d8d8" stroke-width="1.6"><path d="M0 2.5L3 -0.5"/><circle cx="44" cy="-2.5" r="4.2" stroke-width="1.7"/><path d="M40.2 2.8l1-1.2M47.8 2.8l-1-1.2M44 4.4v-1.8" stroke-width="2.6"/><circle cx="70" cy="-2.6" r="6.6" stroke-width="1.5"/><path d="M70 -0.2v2.2" stroke-width="1.7"/><circle cx="115" cy="-4" r="5.4" stroke="#9a9a9a" stroke-width="1.4"/><path d="M118.4 0.4L124 5.6" stroke="#8e8e8e" stroke-width="2"/><circle cx="141.3" cy="-4" r="5.4" stroke="#9a9a9a" stroke-width="1.4"/><path d="M144.70000000000002 0.4L150.3 5.6" stroke="#8e8e8e" stroke-width="2"/><circle cx="167.5" cy="-4" r="5.4" stroke="#9a9a9a" stroke-width="1.4"/><path d="M170.9 0.4L176.5 5.6" stroke="#8e8e8e" stroke-width="2"/><path d="M188.5 0.8h14.5M190.8 0.8v4.6M200.6 0.8v4.6M190.8 5h2.6M198 5h2.6" stroke-width="1.7"/><path d="M193.6 3.6h4.4l-2.2 2.2z" fill="#d8d8d8" stroke="none"/></svg><div class="abs" style="left:1350px;top:0;width:214px;height:6px;overflow:hidden"><div class="t" style="left:4px;top:-9.5px;font-size:12px;color:#d4d4d4;letter-spacing:0.046px">Test&nbsp;&nbsp;|&nbsp;&nbsp;GMS2 VM&nbsp;&nbsp;|&nbsp;&nbsp;Default&nbsp;&nbsp;|&nbsp;&nbsp;Default</div></div><svg class="abs" style="left:1566px;top:0" width="21" height="12" viewBox="0 0 21 12" fill="none" stroke="#d8d8d8" stroke-width="1.8"><circle cx="13" cy="-2" r="7"/><path d="M13 3v4"/></svg>
</body></html>
